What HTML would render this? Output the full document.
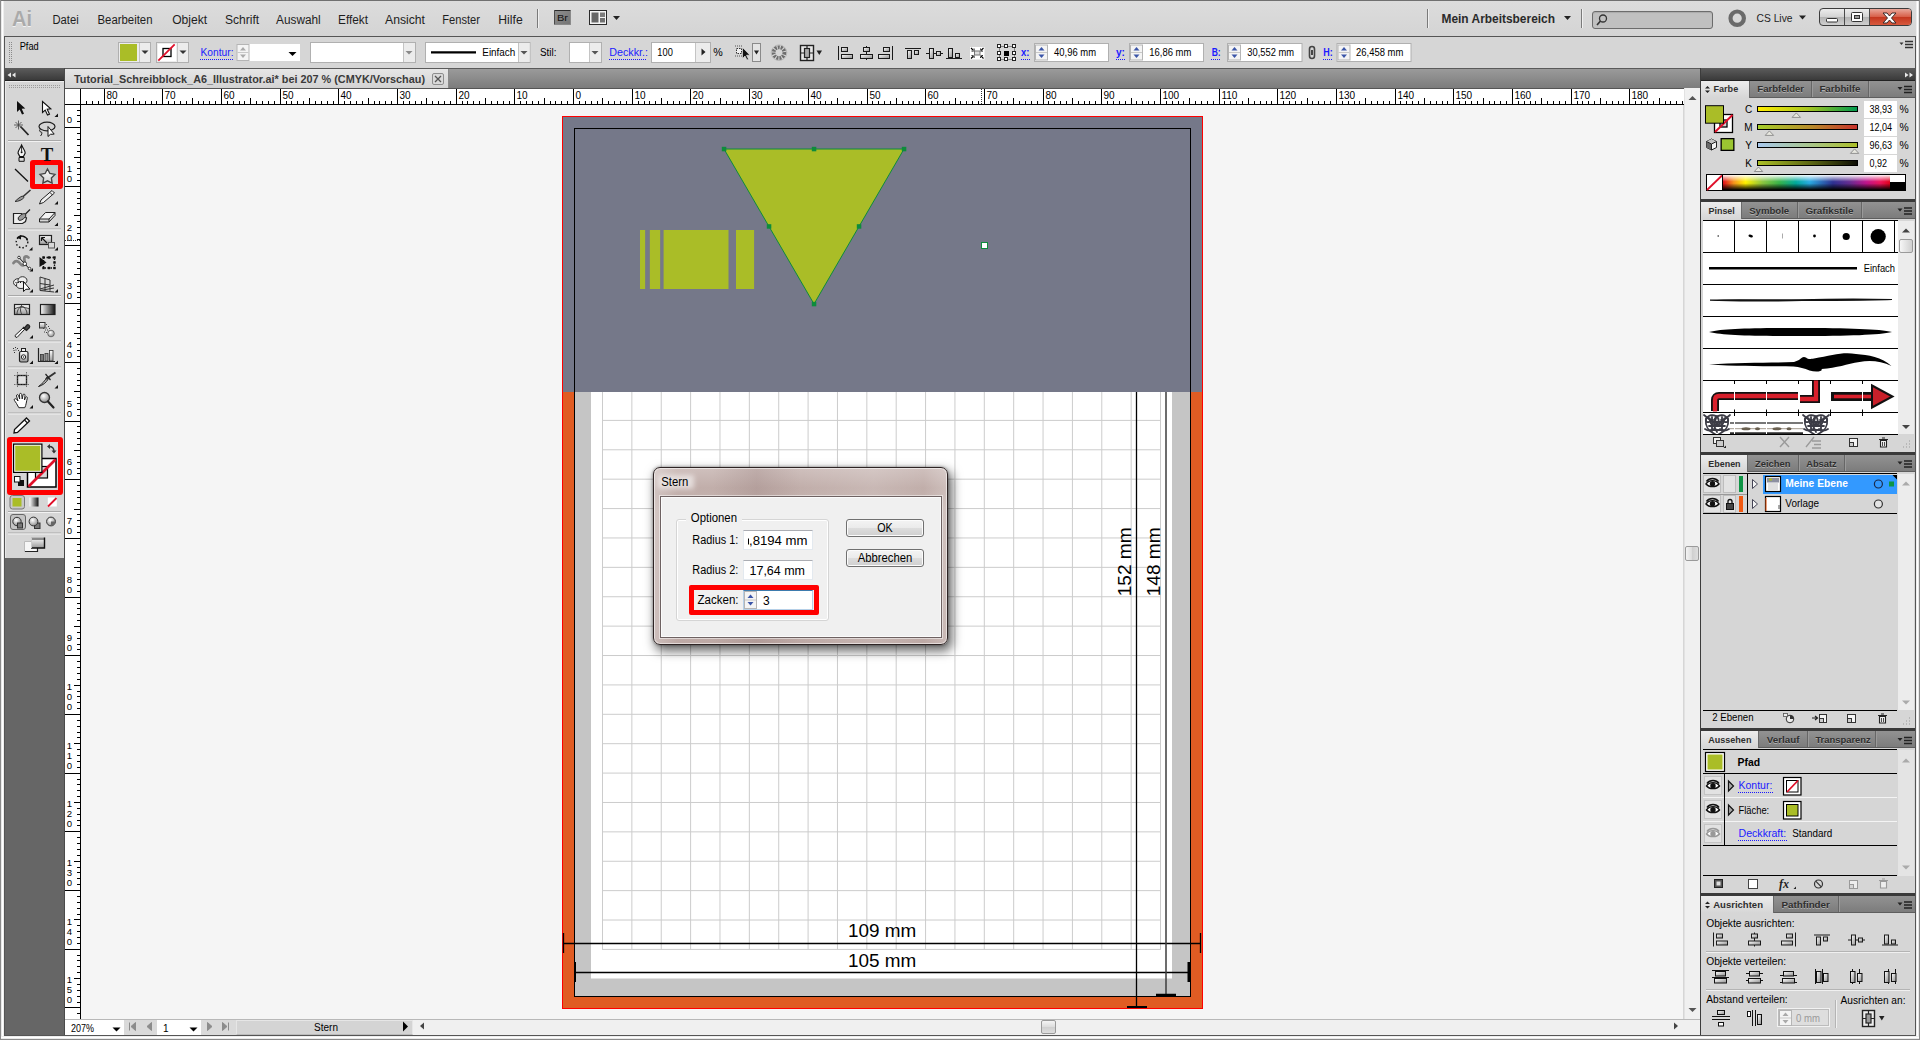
<!DOCTYPE html>
<html lang="de">
<head>
<meta charset="utf-8">
<title>Tutorial_Schreibblock_A6_Illustrator.ai</title>
<style>
*{box-sizing:border-box;margin:0;padding:0}
html,body{width:1920px;height:1040px;overflow:hidden}
body{position:relative;background:#d6d6d6;font-family:"Liberation Sans","DejaVu Sans",sans-serif;font-size:11px;color:#000}
.a{position:absolute}
.t{position:absolute;white-space:nowrap;line-height:1}
svg{position:absolute;overflow:visible}
.ui{font-family:"DejaVu Sans","Liberation Sans",sans-serif}
.blue{color:#1a1aff}
.dot{border-bottom:1px dotted #1a1aff}
</style>
</head>
<body>
<!-- window frame -->
<div class="a" style="left:0;top:0;width:1920px;height:1040px;background:#d6d6d6"></div>
<!-- app bar -->
<div class="a" id="appbar" style="left:1px;top:1px;width:1918px;height:35px;background:linear-gradient(#dcdcdc,#d4d4d4)"></div>
<div class="a" style="left:0;top:0;width:1920px;height:1px;background:#707070"></div>
<!-- control bar -->
<div class="a" id="ctrlbar" style="left:5px;top:36px;width:1910px;height:32px;background:#d6d6d6;border-top:1px solid #555"></div>
<!-- dark zone left (under tools) -->
<div class="a" style="left:5px;top:68px;width:60px;height:967px;background:#666"></div>
<!-- doc tab strip -->
<div class="a" style="left:65px;top:68px;width:1635px;height:20px;background:linear-gradient(#9c9c9c,#7c7c7c)"></div>
<!-- canvas -->
<div class="a" id="canvas" style="left:81px;top:105px;width:1602px;height:914px;background:#f5f5f5"></div>
<!-- right dock background -->
<div class="a" style="left:1700px;top:68px;width:215px;height:967px;background:#3a3a3a"></div>
<!-- window borders -->
<div class="a" style="left:0;top:0;width:1px;height:1040px;background:#8a8a8a"></div>
<div class="a" style="left:1px;top:1px;width:3px;height:1038px;background:linear-gradient(90deg,#dedede,#fff,#e6e6e6)"></div>
<div class="a" style="left:4px;top:36px;width:1px;height:1000px;background:#555"></div>
<div class="a" style="left:1915px;top:36px;width:1px;height:1000px;background:#555"></div>
<div class="a" style="left:1916px;top:1px;width:3px;height:1038px;background:linear-gradient(90deg,#e6e6e6,#fff,#dedede)"></div>
<div class="a" style="left:1919px;top:0;width:1px;height:1040px;background:#8a8a8a"></div>
<div class="a" style="left:4px;top:1035px;width:1912px;height:1px;background:#555"></div>
<div class="a" style="left:1px;top:1036px;width:1918px;height:3px;background:linear-gradient(#e6e6e6,#fff,#dedede)"></div>
<div class="a" style="left:0;top:1039px;width:1920px;height:1px;background:#8a8a8a"></div>
<svg id="art" class="a" style="left:0;top:0" width="1920" height="1040" viewBox="0 0 1920 1040">
<rect x="562" y="116" width="641" height="893" fill="#e05c23"/>
<rect x="575" y="392" width="615" height="604" fill="#c5c5c5"/>
<rect x="591" y="392" width="581" height="586.5" fill="#fff"/>
<path d="M602.50 392V949.6M631.87 392V949.6M661.24 392V949.6M690.61 392V949.6M719.98 392V949.6M749.35 392V949.6M778.72 392V949.6M808.09 392V949.6M837.46 392V949.6M866.83 392V949.6M896.20 392V949.6M925.57 392V949.6M954.94 392V949.6M984.31 392V949.6M1013.68 392V949.6M1043.05 392V949.6M1072.42 392V949.6M1101.79 392V949.6M1131.16 392V949.6M1160.53 392V949.6M602.2 420.40H1160.8M602.2 449.79H1160.8M602.2 479.18H1160.8M602.2 508.57H1160.8M602.2 537.96H1160.8M602.2 567.35H1160.8M602.2 596.74H1160.8M602.2 626.13H1160.8M602.2 655.52H1160.8M602.2 684.91H1160.8M602.2 714.30H1160.8M602.2 743.69H1160.8M602.2 773.08H1160.8M602.2 802.47H1160.8M602.2 831.86H1160.8M602.2 861.25H1160.8M602.2 890.64H1160.8M602.2 920.03H1160.8M602.2 949.42H1160.8" stroke="#cccccc" stroke-width="1" fill="none"/>
<rect x="563" y="117" width="639" height="275" fill="#757889"/>
<rect x="574.5" y="128.5" width="616" height="868" fill="none" stroke="#000" stroke-width="1"/>
<rect x="562.5" y="116.5" width="640" height="892" fill="none" stroke="#ff0000" stroke-width="1"/>
<rect x="640.00" y="230" width="5.15" height="59" fill="#aabd27"/>
<rect x="649.85" y="230" width="10.30" height="59" fill="#aabd27"/>
<rect x="663.60" y="230" width="64.90" height="59" fill="#aabd27"/>
<rect x="736.00" y="230" width="18.10" height="59" fill="#aabd27"/>
<path d="M724 149H904L814 304Z" fill="#aabd27" stroke="#0d8c3c" stroke-width="1"/>
<rect x="721.8" y="146.8" width="4.500" height="4.500" fill="#0d8c3c"/>
<rect x="811.8" y="146.8" width="4.500" height="4.500" fill="#0d8c3c"/>
<rect x="901.8" y="146.8" width="4.500" height="4.500" fill="#0d8c3c"/>
<rect x="766.8" y="224.2" width="4.500" height="4.500" fill="#0d8c3c"/>
<rect x="856.8" y="224.2" width="4.500" height="4.500" fill="#0d8c3c"/>
<rect x="811.8" y="301.8" width="4.500" height="4.500" fill="#0d8c3c"/>
<rect x="981.5" y="242.5" width="6" height="6" fill="#fff" stroke="#0d8c3c" stroke-width="1"/>
<path d="M563 943.5H1201M575 972.5H1189" stroke="#000" stroke-width="1.5" fill="none"/>
<path d="M563.5 933V953M1200.5 933V953" stroke="#000" stroke-width="1.3" fill="none"/>
<path d="M575 962V982" stroke="#000" stroke-width="2" fill="none"/>
<path d="M1189 962V982" stroke="#000" stroke-width="3" fill="none"/>
<path d="M1136.5 392V1007" stroke="#000" stroke-width="1.3" fill="none"/>
<path d="M1127 1007H1147" stroke="#000" stroke-width="2" fill="none"/>
<path d="M1166 392V995" stroke="#3c3c3c" stroke-width="1.5" fill="none"/>
<path d="M1156 995H1176" stroke="#000" stroke-width="2.5" fill="none"/>
<text x="848" y="937" font-size="18.700" textLength="68.300" lengthAdjust="spacingAndGlyphs" font-family="Liberation Sans, sans-serif">109 mm</text>
<text x="848" y="966.600" font-size="18.700" textLength="68.300" lengthAdjust="spacingAndGlyphs" font-family="Liberation Sans, sans-serif">105 mm</text>
<text transform="translate(1130.500 596.300) rotate(-90)" font-size="18.700" textLength="69" lengthAdjust="spacingAndGlyphs" font-family="Liberation Sans, sans-serif">152 mm</text>
<text transform="translate(1160.200 596.300) rotate(-90)" font-size="18.700" textLength="69" lengthAdjust="spacingAndGlyphs" font-family="Liberation Sans, sans-serif">148 mm</text>
</svg>
<div class="a" style="left:65px;top:68px;width:1635px;height:1px;background:#5a5a5a"></div>
<div class="a" style="left:65px;top:69px;width:384px;height:19px;background:linear-gradient(#e6e6e6,#d3d3d3);border-right:1px solid #8a8a8a"></div>
<div class="a" style="left:64px;top:68px;width:1px;height:967px;background:#4a4a4a"></div>
<div class="a" style="left:65px;top:88px;width:1619px;height:17px;background:#fff;border-top:1px solid #555"></div>
<div class="a" style="left:65px;top:105px;width:16px;height:914px;background:#fff"></div>
<div class="a" style="left:1684px;top:88px;width:16px;height:931px;background:#f0f0f0;border-left:1px solid #e2e2e2"></div>
<svg id="rulers" class="a" style="left:0;top:0" width="1920" height="1040" viewBox="0 0 1920 1040" font-family="Liberation Sans, sans-serif">
<text x="74" y="83" font-size="11.5" fill="#3a3a3a" font-weight="bold" textLength="351" lengthAdjust="spacingAndGlyphs">Tutorial_Schreibblock_A6_Illustrator.ai* bei 207 % (CMYK/Vorschau)</text>
<rect x="432.5" y="73.5" width="11" height="11" fill="#d9d9d9" stroke="#8e8e8e" stroke-width="1" rx="1.5"/>
<path d="M435 76L441 82M441 76L435 82" fill="none" stroke="#555" stroke-width="1.3"/>
<path d="M86 101h1v3h-1zM92 101h1v3h-1zM98 101h1v3h-1zM104 89h1v15h-1zM110 101h1v3h-1zM115 101h1v3h-1zM121 101h1v3h-1zM127 101h1v3h-1zM133 98h1v6h-1zM139 101h1v3h-1zM145 101h1v3h-1zM151 101h1v3h-1zM156 101h1v3h-1zM162 89h1v15h-1zM168 101h1v3h-1zM174 101h1v3h-1zM180 101h1v3h-1zM186 101h1v3h-1zM192 98h1v6h-1zM198 101h1v3h-1zM203 101h1v3h-1zM209 101h1v3h-1zM215 101h1v3h-1zM221 89h1v15h-1zM227 101h1v3h-1zM233 101h1v3h-1zM239 101h1v3h-1zM244 101h1v3h-1zM250 98h1v6h-1zM256 101h1v3h-1zM262 101h1v3h-1zM268 101h1v3h-1zM274 101h1v3h-1zM280 89h1v15h-1zM286 101h1v3h-1zM291 101h1v3h-1zM297 101h1v3h-1zM303 101h1v3h-1zM309 98h1v6h-1zM315 101h1v3h-1zM321 101h1v3h-1zM327 101h1v3h-1zM333 101h1v3h-1zM338 89h1v15h-1zM344 101h1v3h-1zM350 101h1v3h-1zM356 101h1v3h-1zM362 101h1v3h-1zM368 98h1v6h-1zM374 101h1v3h-1zM379 101h1v3h-1zM385 101h1v3h-1zM391 101h1v3h-1zM397 89h1v15h-1zM403 101h1v3h-1zM409 101h1v3h-1zM415 101h1v3h-1zM421 101h1v3h-1zM426 98h1v6h-1zM432 101h1v3h-1zM438 101h1v3h-1zM444 101h1v3h-1zM450 101h1v3h-1zM456 89h1v15h-1zM462 101h1v3h-1zM467 101h1v3h-1zM473 101h1v3h-1zM479 101h1v3h-1zM485 98h1v6h-1zM491 101h1v3h-1zM497 101h1v3h-1zM503 101h1v3h-1zM509 101h1v3h-1zM514 89h1v15h-1zM520 101h1v3h-1zM526 101h1v3h-1zM532 101h1v3h-1zM538 101h1v3h-1zM544 98h1v6h-1zM550 101h1v3h-1zM555 101h1v3h-1zM561 101h1v3h-1zM567 101h1v3h-1zM573 89h1v15h-1zM579 101h1v3h-1zM585 101h1v3h-1zM591 101h1v3h-1zM597 101h1v3h-1zM602 98h1v6h-1zM608 101h1v3h-1zM614 101h1v3h-1zM620 101h1v3h-1zM626 101h1v3h-1zM632 89h1v15h-1zM638 101h1v3h-1zM644 101h1v3h-1zM649 101h1v3h-1zM655 101h1v3h-1zM661 98h1v6h-1zM667 101h1v3h-1zM673 101h1v3h-1zM679 101h1v3h-1zM685 101h1v3h-1zM690 89h1v15h-1zM696 101h1v3h-1zM702 101h1v3h-1zM708 101h1v3h-1zM714 101h1v3h-1zM720 98h1v6h-1zM726 101h1v3h-1zM732 101h1v3h-1zM737 101h1v3h-1zM743 101h1v3h-1zM749 89h1v15h-1zM755 101h1v3h-1zM761 101h1v3h-1zM767 101h1v3h-1zM773 101h1v3h-1zM778 98h1v6h-1zM784 101h1v3h-1zM790 101h1v3h-1zM796 101h1v3h-1zM802 101h1v3h-1zM808 89h1v15h-1zM814 101h1v3h-1zM820 101h1v3h-1zM825 101h1v3h-1zM831 101h1v3h-1zM837 98h1v6h-1zM843 101h1v3h-1zM849 101h1v3h-1zM855 101h1v3h-1zM861 101h1v3h-1zM867 89h1v15h-1zM872 101h1v3h-1zM878 101h1v3h-1zM884 101h1v3h-1zM890 101h1v3h-1zM896 98h1v6h-1zM902 101h1v3h-1zM908 101h1v3h-1zM913 101h1v3h-1zM919 101h1v3h-1zM925 89h1v15h-1zM931 101h1v3h-1zM937 101h1v3h-1zM943 101h1v3h-1zM949 101h1v3h-1zM955 98h1v6h-1zM960 101h1v3h-1zM966 101h1v3h-1zM972 101h1v3h-1zM978 101h1v3h-1zM984 89h1v15h-1zM990 101h1v3h-1zM996 101h1v3h-1zM1001 101h1v3h-1zM1007 101h1v3h-1zM1013 98h1v6h-1zM1019 101h1v3h-1zM1025 101h1v3h-1zM1031 101h1v3h-1zM1037 101h1v3h-1zM1043 89h1v15h-1zM1048 101h1v3h-1zM1054 101h1v3h-1zM1060 101h1v3h-1zM1066 101h1v3h-1zM1072 98h1v6h-1zM1078 101h1v3h-1zM1084 101h1v3h-1zM1089 101h1v3h-1zM1095 101h1v3h-1zM1101 89h1v15h-1zM1107 101h1v3h-1zM1113 101h1v3h-1zM1119 101h1v3h-1zM1125 101h1v3h-1zM1131 98h1v6h-1zM1136 101h1v3h-1zM1142 101h1v3h-1zM1148 101h1v3h-1zM1154 101h1v3h-1zM1160 89h1v15h-1zM1166 101h1v3h-1zM1172 101h1v3h-1zM1178 101h1v3h-1zM1183 101h1v3h-1zM1189 98h1v6h-1zM1195 101h1v3h-1zM1201 101h1v3h-1zM1207 101h1v3h-1zM1213 101h1v3h-1zM1219 89h1v15h-1zM1224 101h1v3h-1zM1230 101h1v3h-1zM1236 101h1v3h-1zM1242 101h1v3h-1zM1248 98h1v6h-1zM1254 101h1v3h-1zM1260 101h1v3h-1zM1266 101h1v3h-1zM1271 101h1v3h-1zM1277 89h1v15h-1zM1283 101h1v3h-1zM1289 101h1v3h-1zM1295 101h1v3h-1zM1301 101h1v3h-1zM1307 98h1v6h-1zM1312 101h1v3h-1zM1318 101h1v3h-1zM1324 101h1v3h-1zM1330 101h1v3h-1zM1336 89h1v15h-1zM1342 101h1v3h-1zM1348 101h1v3h-1zM1354 101h1v3h-1zM1359 101h1v3h-1zM1365 98h1v6h-1zM1371 101h1v3h-1zM1377 101h1v3h-1zM1383 101h1v3h-1zM1389 101h1v3h-1zM1395 89h1v15h-1zM1400 101h1v3h-1zM1406 101h1v3h-1zM1412 101h1v3h-1zM1418 101h1v3h-1zM1424 98h1v6h-1zM1430 101h1v3h-1zM1436 101h1v3h-1zM1442 101h1v3h-1zM1447 101h1v3h-1zM1453 89h1v15h-1zM1459 101h1v3h-1zM1465 101h1v3h-1zM1471 101h1v3h-1zM1477 101h1v3h-1zM1483 98h1v6h-1zM1489 101h1v3h-1zM1494 101h1v3h-1zM1500 101h1v3h-1zM1506 101h1v3h-1zM1512 89h1v15h-1zM1518 101h1v3h-1zM1524 101h1v3h-1zM1530 101h1v3h-1zM1535 101h1v3h-1zM1541 98h1v6h-1zM1547 101h1v3h-1zM1553 101h1v3h-1zM1559 101h1v3h-1zM1565 101h1v3h-1zM1571 89h1v15h-1zM1577 101h1v3h-1zM1582 101h1v3h-1zM1588 101h1v3h-1zM1594 101h1v3h-1zM1600 98h1v6h-1zM1606 101h1v3h-1zM1612 101h1v3h-1zM1618 101h1v3h-1zM1623 101h1v3h-1zM1629 89h1v15h-1zM1635 101h1v3h-1zM1641 101h1v3h-1zM1647 101h1v3h-1zM1653 101h1v3h-1zM1659 98h1v6h-1zM1665 101h1v3h-1zM1670 101h1v3h-1zM1676 101h1v3h-1zM1682 101h1v3h-1zM65 104H1684v1H65zM80 89h1v930h-1zM77 110h3v1h-3zM77 115h3v1h-3zM77 121h3v1h-3zM65 127h15v1h-15zM77 133h3v1h-3zM77 139h3v1h-3zM77 145h3v1h-3zM77 151h3v1h-3zM74 157h6v1h-6zM77 162h3v1h-3zM77 168h3v1h-3zM77 174h3v1h-3zM77 180h3v1h-3zM65 186h15v1h-15zM77 192h3v1h-3zM77 198h3v1h-3zM77 203h3v1h-3zM77 209h3v1h-3zM74 215h6v1h-6zM77 221h3v1h-3zM77 227h3v1h-3zM77 233h3v1h-3zM77 239h3v1h-3zM65 245h15v1h-15zM77 250h3v1h-3zM77 256h3v1h-3zM77 262h3v1h-3zM77 268h3v1h-3zM74 274h6v1h-6zM77 280h3v1h-3zM77 286h3v1h-3zM77 292h3v1h-3zM77 297h3v1h-3zM65 303h15v1h-15zM77 309h3v1h-3zM77 315h3v1h-3zM77 321h3v1h-3zM77 327h3v1h-3zM74 333h6v1h-6zM77 338h3v1h-3zM77 344h3v1h-3zM77 350h3v1h-3zM77 356h3v1h-3zM65 362h15v1h-15zM77 368h3v1h-3zM77 374h3v1h-3zM77 380h3v1h-3zM77 385h3v1h-3zM74 391h6v1h-6zM77 397h3v1h-3zM77 403h3v1h-3zM77 409h3v1h-3zM77 415h3v1h-3zM65 421h15v1h-15zM77 426h3v1h-3zM77 432h3v1h-3zM77 438h3v1h-3zM77 444h3v1h-3zM74 450h6v1h-6zM77 456h3v1h-3zM77 462h3v1h-3zM77 468h3v1h-3zM77 473h3v1h-3zM65 479h15v1h-15zM77 485h3v1h-3zM77 491h3v1h-3zM77 497h3v1h-3zM77 503h3v1h-3zM74 509h6v1h-6zM77 514h3v1h-3zM77 520h3v1h-3zM77 526h3v1h-3zM77 532h3v1h-3zM65 538h15v1h-15zM77 544h3v1h-3zM77 550h3v1h-3zM77 556h3v1h-3zM77 561h3v1h-3zM74 567h6v1h-6zM77 573h3v1h-3zM77 579h3v1h-3zM77 585h3v1h-3zM77 591h3v1h-3zM65 597h15v1h-15zM77 603h3v1h-3zM77 608h3v1h-3zM77 614h3v1h-3zM77 620h3v1h-3zM74 626h6v1h-6zM77 632h3v1h-3zM77 638h3v1h-3zM77 644h3v1h-3zM77 649h3v1h-3zM65 655h15v1h-15zM77 661h3v1h-3zM77 667h3v1h-3zM77 673h3v1h-3zM77 679h3v1h-3zM74 685h6v1h-6zM77 691h3v1h-3zM77 696h3v1h-3zM77 702h3v1h-3zM77 708h3v1h-3zM65 714h15v1h-15zM77 720h3v1h-3zM77 726h3v1h-3zM77 732h3v1h-3zM77 737h3v1h-3zM74 743h6v1h-6zM77 749h3v1h-3zM77 755h3v1h-3zM77 761h3v1h-3zM77 767h3v1h-3zM65 773h15v1h-15zM77 779h3v1h-3zM77 784h3v1h-3zM77 790h3v1h-3zM77 796h3v1h-3zM74 802h6v1h-6zM77 808h3v1h-3zM77 814h3v1h-3zM77 820h3v1h-3zM77 825h3v1h-3zM65 831h15v1h-15zM77 837h3v1h-3zM77 843h3v1h-3zM77 849h3v1h-3zM77 855h3v1h-3zM74 861h6v1h-6zM77 867h3v1h-3zM77 872h3v1h-3zM77 878h3v1h-3zM77 884h3v1h-3zM65 890h15v1h-15zM77 896h3v1h-3zM77 902h3v1h-3zM77 908h3v1h-3zM77 914h3v1h-3zM74 919h6v1h-6zM77 925h3v1h-3zM77 931h3v1h-3zM77 937h3v1h-3zM77 943h3v1h-3zM65 949h15v1h-15zM77 955h3v1h-3zM77 960h3v1h-3zM77 966h3v1h-3zM77 972h3v1h-3zM74 978h6v1h-6zM77 984h3v1h-3zM77 990h3v1h-3zM77 996h3v1h-3zM77 1002h3v1h-3zM65 1007h15v1h-15zM77 1013h3v1h-3z" fill="#000"/>
<text x="106.4" y="98.9" font-size="10" fill="#000">80</text>
<text x="164.4" y="98.9" font-size="10" fill="#000">70</text>
<text x="223.4" y="98.9" font-size="10" fill="#000">60</text>
<text x="282.4" y="98.9" font-size="10" fill="#000">50</text>
<text x="340.4" y="98.9" font-size="10" fill="#000">40</text>
<text x="399.4" y="98.9" font-size="10" fill="#000">30</text>
<text x="458.4" y="98.9" font-size="10" fill="#000">20</text>
<text x="516.4" y="98.9" font-size="10" fill="#000">10</text>
<text x="575.4" y="98.9" font-size="10" fill="#000">0</text>
<text x="634.4" y="98.9" font-size="10" fill="#000">10</text>
<text x="692.4" y="98.9" font-size="10" fill="#000">20</text>
<text x="751.4" y="98.9" font-size="10" fill="#000">30</text>
<text x="810.4" y="98.9" font-size="10" fill="#000">40</text>
<text x="869.4" y="98.9" font-size="10" fill="#000">50</text>
<text x="927.4" y="98.9" font-size="10" fill="#000">60</text>
<text x="986.4" y="98.9" font-size="10" fill="#000">70</text>
<text x="1045.4" y="98.9" font-size="10" fill="#000">80</text>
<text x="1103.4" y="98.9" font-size="10" fill="#000">90</text>
<text x="1162.4" y="98.9" font-size="10" fill="#000">100</text>
<text x="1221.4" y="98.9" font-size="10" fill="#000">110</text>
<text x="1279.4" y="98.9" font-size="10" fill="#000">120</text>
<text x="1338.4" y="98.9" font-size="10" fill="#000">130</text>
<text x="1397.4" y="98.9" font-size="10" fill="#000">140</text>
<text x="1455.4" y="98.9" font-size="10" fill="#000">150</text>
<text x="1514.4" y="98.9" font-size="10" fill="#000">160</text>
<text x="1573.4" y="98.9" font-size="10" fill="#000">170</text>
<text x="1631.4" y="98.9" font-size="10" fill="#000">180</text>
<text x="69.5" y="122.8" font-size="9.6" fill="#000" text-anchor="middle">0</text>
<text x="69.5" y="181.8" font-size="9.6" fill="#000" text-anchor="middle">0</text>
<text x="69.5" y="171.8" font-size="9.6" fill="#000" text-anchor="middle">1</text>
<text x="69.5" y="240.8" font-size="9.6" fill="#000" text-anchor="middle">0</text>
<text x="69.5" y="230.8" font-size="9.6" fill="#000" text-anchor="middle">2</text>
<text x="69.5" y="298.8" font-size="9.6" fill="#000" text-anchor="middle">0</text>
<text x="69.5" y="288.8" font-size="9.6" fill="#000" text-anchor="middle">3</text>
<text x="69.5" y="357.8" font-size="9.6" fill="#000" text-anchor="middle">0</text>
<text x="69.5" y="347.8" font-size="9.6" fill="#000" text-anchor="middle">4</text>
<text x="69.5" y="416.8" font-size="9.6" fill="#000" text-anchor="middle">0</text>
<text x="69.5" y="406.8" font-size="9.6" fill="#000" text-anchor="middle">5</text>
<text x="69.5" y="474.8" font-size="9.6" fill="#000" text-anchor="middle">0</text>
<text x="69.5" y="464.8" font-size="9.6" fill="#000" text-anchor="middle">6</text>
<text x="69.5" y="533.8" font-size="9.6" fill="#000" text-anchor="middle">0</text>
<text x="69.5" y="523.8" font-size="9.6" fill="#000" text-anchor="middle">7</text>
<text x="69.5" y="592.8" font-size="9.6" fill="#000" text-anchor="middle">0</text>
<text x="69.5" y="582.8" font-size="9.6" fill="#000" text-anchor="middle">8</text>
<text x="69.5" y="650.8" font-size="9.6" fill="#000" text-anchor="middle">0</text>
<text x="69.5" y="640.8" font-size="9.6" fill="#000" text-anchor="middle">9</text>
<text x="69.5" y="709.8" font-size="9.6" fill="#000" text-anchor="middle">0</text>
<text x="69.5" y="699.8" font-size="9.6" fill="#000" text-anchor="middle">0</text>
<text x="69.5" y="689.8" font-size="9.6" fill="#000" text-anchor="middle">1</text>
<text x="69.5" y="768.8" font-size="9.6" fill="#000" text-anchor="middle">0</text>
<text x="69.5" y="758.8" font-size="9.6" fill="#000" text-anchor="middle">1</text>
<text x="69.5" y="748.8" font-size="9.6" fill="#000" text-anchor="middle">1</text>
<text x="69.5" y="826.8" font-size="9.6" fill="#000" text-anchor="middle">0</text>
<text x="69.5" y="816.8" font-size="9.6" fill="#000" text-anchor="middle">2</text>
<text x="69.5" y="806.8" font-size="9.6" fill="#000" text-anchor="middle">1</text>
<text x="69.5" y="885.8" font-size="9.6" fill="#000" text-anchor="middle">0</text>
<text x="69.5" y="875.8" font-size="9.6" fill="#000" text-anchor="middle">3</text>
<text x="69.5" y="865.8" font-size="9.6" fill="#000" text-anchor="middle">1</text>
<text x="69.5" y="944.8" font-size="9.6" fill="#000" text-anchor="middle">0</text>
<text x="69.5" y="934.8" font-size="9.6" fill="#000" text-anchor="middle">4</text>
<text x="69.5" y="924.8" font-size="9.6" fill="#000" text-anchor="middle">1</text>
<text x="69.5" y="1002.8" font-size="9.6" fill="#000" text-anchor="middle">0</text>
<text x="69.5" y="992.8" font-size="9.6" fill="#000" text-anchor="middle">5</text>
<text x="69.5" y="982.8" font-size="9.6" fill="#000" text-anchor="middle">1</text>
<path d="M981.5 89V104" fill="none" stroke="#333" stroke-width="1" stroke-dasharray="1 1"/>
<path d="M65 240.5H80" fill="none" stroke="#333" stroke-width="1" stroke-dasharray="1 1"/>
</svg>
<div class="a" style="left:65px;top:1019px;width:1635px;height:16px;background:#f0f0f0;border-top:1px solid #b8b8b8"></div>
<div class="a" style="left:65px;top:1020px;width:59px;height:15px;background:#fff"></div>
<div class="a" style="left:124px;top:1020px;width:33px;height:15px;background:#dadada"></div>
<div class="a" style="left:157px;top:1020px;width:44px;height:15px;background:#fff"></div>
<div class="a" style="left:201px;top:1020px;width:35px;height:15px;background:#dadada"></div>
<div class="a" style="left:236px;top:1020px;width:177px;height:15px;background:#d4d4d4;border:1px solid #e6e6e6;border-bottom-color:#bbb"></div>
<div class="a" style="left:1041px;top:1020px;width:15px;height:14px;background:linear-gradient(#f4f4f4,#dcdcdc 50%,#cfcfcf 51%,#dedede);border:1px solid #9a9a9a;border-radius:2px"></div>
<div class="a" style="left:1685px;top:546px;width:14px;height:15px;background:linear-gradient(90deg,#f4f4f4,#dcdcdc 50%,#cfcfcf 51%,#dedede);border:1px solid #9a9a9a;border-radius:2px"></div>
<svg id="status" class="a" style="left:0;top:0" width="1920" height="1040" viewBox="0 0 1920 1040" font-family="Liberation Sans, sans-serif">
<text x="71" y="1031.5" font-size="10" fill="#000" textLength="23" lengthAdjust="spacingAndGlyphs">207%</text>
<path d="M112.5 1027.5h8l-4 4z" fill="#000"/>
<text x="163" y="1031.5" font-size="10" fill="#000">1</text>
<path d="M189.5 1027.5h8l-4 4z" fill="#000"/>
<path d="M129.5 1022.5v8M135.5 1022.5v8l-4.5-4z" fill="#8c8c8c" stroke="#8c8c8c" stroke-width="1"/>
<path d="M151.5 1022.5v8l-4.5-4z" fill="#8c8c8c" stroke="#8c8c8c" stroke-width="1"/>
<path d="M207.5 1022.5v8l4.5-4z" fill="#8c8c8c" stroke="#8c8c8c" stroke-width="1"/>
<path d="M222.5 1022.5v8l4.5-4zM228.5 1022.5v8" fill="#8c8c8c" stroke="#8c8c8c" stroke-width="1"/>
<text x="326" y="1031" font-size="10" fill="#000" text-anchor="middle">Stern</text>
<path d="M403 1021.5v10l5-5z" fill="#000"/>
<path d="M424 1022.5v7l-4-3.5z" fill="#444"/>
<path d="M1674 1022.5v7l4-3.5z" fill="#444"/>
<path d="M1688.5 100h8l-4-4z" fill="#555"/>
<path d="M1688.5 1008h8l-4 4z" fill="#555"/>
</svg>
<div class="a" style="left:554px;top:10px;width:17px;height:15px;background:linear-gradient(135deg,#8e8e8e,#747474);border:1px solid #8a8a8a;border-top-color:#2a2a2a;border-left-color:#4a4a4a;border-radius:1px"></div>
<div class="a" style="left:1592px;top:11px;width:121px;height:18px;background:#c0c0c0;border:1px solid #6c6c6c;border-radius:3px;box-shadow:inset 0 1px 1px #aaa"></div>
<div class="a" style="left:1819px;top:8px;width:93px;height:18px;border:1px solid #3c3c3c;border-radius:4px;background:linear-gradient(#ececec,#d4d4d4 48%,#b4b4b4 52%,#cfcfcf);overflow:hidden"><div class="a" style="left:50px;top:0;width:42px;height:16px;background:linear-gradient(#e9a79a,#d8604a 48%,#c4371f 52%,#d85a3e)"></div><div class="a" style="left:24px;top:0;width:1px;height:16px;background:#4a4a4a"></div><div class="a" style="left:49px;top:0;width:1px;height:16px;background:#4a4a4a"></div></div>
<svg id="appbar_svg" class="a" style="left:0;top:0" width="1920" height="1040" viewBox="0 0 1920 1040" font-family="Liberation Sans, sans-serif">
<text x="12" y="26.5" font-size="22" fill="#f2f2f2" font-weight="bold" textLength="20" lengthAdjust="spacingAndGlyphs">Ai</text>
<text x="12" y="25.5" font-size="22" fill="#aaaaaa" font-weight="bold" textLength="20" lengthAdjust="spacingAndGlyphs">Ai</text>
<text x="52.5" y="23.8" font-size="12" fill="#1e1e1e" textLength="26.2" lengthAdjust="spacingAndGlyphs">Datei</text>
<text x="97.5" y="23.8" font-size="12" fill="#1e1e1e" textLength="55" lengthAdjust="spacingAndGlyphs">Bearbeiten</text>
<text x="172.2" y="23.8" font-size="12" fill="#1e1e1e" textLength="35" lengthAdjust="spacingAndGlyphs">Objekt</text>
<text x="225" y="23.8" font-size="12" fill="#1e1e1e" textLength="34.2" lengthAdjust="spacingAndGlyphs">Schrift</text>
<text x="276" y="23.8" font-size="12" fill="#1e1e1e" textLength="44.7" lengthAdjust="spacingAndGlyphs">Auswahl</text>
<text x="338" y="23.8" font-size="12" fill="#1e1e1e" textLength="30" lengthAdjust="spacingAndGlyphs">Effekt</text>
<text x="385" y="23.8" font-size="12" fill="#1e1e1e" textLength="40" lengthAdjust="spacingAndGlyphs">Ansicht</text>
<text x="442.3" y="23.8" font-size="12" fill="#1e1e1e" textLength="37.7" lengthAdjust="spacingAndGlyphs">Fenster</text>
<text x="498.3" y="23.8" font-size="12" fill="#1e1e1e" textLength="24.4" lengthAdjust="spacingAndGlyphs">Hilfe</text>
<path d="M537.5 9V28M1427.5 9V28M1581.5 9V28" fill="none" stroke="#7a7a7a" stroke-width="1"/>
<path d="M538.5 9V28M1428.5 9V28M1582.5 9V28" fill="none" stroke="#f0f0f0" stroke-width="1"/>
<text x="562.5" y="21.3" font-size="9.5" fill="#111" text-anchor="middle" textLength="11" lengthAdjust="spacingAndGlyphs">Br</text>
<rect x="589.5" y="10.5" width="17" height="14" fill="#f4f4f4" stroke="#2a2a2a" stroke-width="1"/>
<rect x="591.5" y="12.5" width="7" height="10" fill="#666"/>
<rect x="600" y="12.5" width="5" height="4.5" fill="#7c7c7c"/>
<rect x="600" y="18" width="5" height="4.5" fill="#707070"/>
<path d="M613 16h7l-3.5 4z" fill="#222"/>
<text x="1441.5" y="23" font-size="12" fill="#2a2a2a" font-weight="bold" textLength="113.5" lengthAdjust="spacingAndGlyphs">Mein Arbeitsbereich</text>
<path d="M1564 16h7l-3.5 4z" fill="#222"/>
<circle cx="1603" cy="18.5" r="3.5" fill="none" stroke="#333" stroke-width="1.3"/>
<path d="M1600.5 21L1597 25" fill="none" stroke="#333" stroke-width="1.6"/>
<circle cx="1737.2" cy="18.2" r="6.7" fill="none" stroke="#6a6a6a" stroke-width="4.2"/>
<text x="1756.5" y="21.5" font-size="11" fill="#1e1e1e" textLength="36" lengthAdjust="spacingAndGlyphs">CS Live</text>
<path d="M1799 15.5h7l-3.5 4z" fill="#222"/>
<rect x="1826.5" y="18.5" width="11" height="3.5" fill="#fff" stroke="#333" stroke-width="1" rx="1"/>
<rect x="1851.5" y="12.5" width="11" height="9" fill="#fff" stroke="#333" stroke-width="1" rx="1"/>
<rect x="1854.5" y="15.5" width="5" height="3" fill="#999" stroke="#333" stroke-width="1"/>
<path d="M1883 13l4 0 2.5 3 2.5-3 4 0-4.5 5 4.5 5-4 0-2.5-3-2.5 3-4 0 4.5-5z" fill="#fff" stroke="#3a2a2a" stroke-width="1"/>
</svg>
<svg id="ctrl" class="a" style="left:0;top:0" width="1920" height="1040" viewBox="0 0 1920 1040" font-family="Liberation Sans, sans-serif">
<defs><linearGradient id="gbox" x1="0" y1="0" x2="1" y2="1"><stop offset="0" stop-color="#fff"/><stop offset="1" stop-color="#8e8e8e"/></linearGradient></defs>
<path d="M9 42h1v1h-1zM11 42h1v1h-1zM9 44h1v1h-1zM11 44h1v1h-1zM9 46h1v1h-1zM11 46h1v1h-1zM9 48h1v1h-1zM11 48h1v1h-1zM9 50h1v1h-1zM11 50h1v1h-1zM9 52h1v1h-1zM11 52h1v1h-1zM9 54h1v1h-1zM11 54h1v1h-1zM9 56h1v1h-1zM11 56h1v1h-1zM9 58h1v1h-1zM11 58h1v1h-1zM9 60h1v1h-1zM11 60h1v1h-1zM9 62h1v1h-1zM11 62h1v1h-1z" fill="#8a8a8a"/>
<text x="19.7" y="49.5" font-size="10" fill="#000" textLength="19" lengthAdjust="spacingAndGlyphs">Pfad</text>
<rect x="118.5" y="42.5" width="32" height="20" fill="#ececec" stroke="#b0b0b0" stroke-width="1"/>
<rect x="120" y="44" width="17" height="17" fill="#aabd27"/>
<path d="M139.5 43V62" fill="none" stroke="#c4c4c4" stroke-width="1"/>
<path d="M141.5 50.5h7l-3.5 3.5z" fill="#333"/>
<rect x="156.5" y="42.5" width="32" height="20" fill="#ececec" stroke="#b0b0b0" stroke-width="1"/>
<rect x="158" y="44" width="18" height="17" fill="#fff"/>
<rect x="163" y="48.5" width="8" height="8" fill="none" stroke="#000" stroke-width="1.3"/>
<path d="M158.3 60.7L174.7 44.3" fill="none" stroke="#e0102a" stroke-width="1.8"/>
<path d="M177.5 43V62" fill="none" stroke="#c4c4c4" stroke-width="1"/>
<path d="M179.5 50.5h7l-3.5 3.5z" fill="#333"/>
<text x="200.5" y="55.7" font-size="10" fill="#1a1aff" textLength="33" lengthAdjust="spacingAndGlyphs">Kontur:</text>
<path d="M200 59.5H234" fill="none" stroke="#1a1aff" stroke-width="1" stroke-dasharray="1 1"/>
<rect x="249" y="44" width="51" height="17" fill="#fff"/>
<rect x="237" y="44.5" width="12" height="16" fill="#f4f4f4" stroke="#b5b5b5" stroke-width="1"/><path d="M237.5 52.5h11" fill="none" stroke="#c8c8c8" stroke-width="1"/><path d="M240 50.5l3 -3.5l3 3.5z" fill="#aaa"/><path d="M240 54.5l3 3.5l3 -3.5z" fill="#aaa"/>
<path d="M288.5 52h8l-4 4z" fill="#000"/>
<rect x="310.5" y="42.5" width="105" height="20" fill="#fff" stroke="#b0b0b0" stroke-width="1"/>
<rect x="403" y="43" width="12" height="19" fill="#ececec"/>
<path d="M403.5 43V62" fill="none" stroke="#c4c4c4" stroke-width="1"/>
<path d="M405.5 51h7l-3.5 3.5z" fill="#8a8a8a"/>
<rect x="425.5" y="42.5" width="104.5" height="20" fill="#fff" stroke="#b0b0b0" stroke-width="1"/>
<rect x="518" y="43" width="11.5" height="19" fill="#ececec"/>
<path d="M518.5 43V62" fill="none" stroke="#c4c4c4" stroke-width="1"/>
<path d="M520.5 51h7l-3.5 3.5z" fill="#555"/>
<path d="M431 52.3H476" fill="none" stroke="#000" stroke-width="2.2"/>
<text x="482.3" y="55.7" font-size="10" fill="#000" textLength="33" lengthAdjust="spacingAndGlyphs">Einfach</text>
<text x="540" y="55.7" font-size="10" fill="#000" textLength="16.5" lengthAdjust="spacingAndGlyphs">Stil:</text>
<rect x="569.5" y="42.5" width="32" height="20" fill="#fff" stroke="#b0b0b0" stroke-width="1"/>
<rect x="589" y="43" width="12" height="19" fill="#ececec"/>
<path d="M589.5 43V62" fill="none" stroke="#c4c4c4" stroke-width="1"/>
<path d="M591.5 51h7l-3.5 3.5z" fill="#555"/>
<text x="609.3" y="55.7" font-size="10" fill="#1a1aff" textLength="38.7" lengthAdjust="spacingAndGlyphs">Deckkr.:</text>
<path d="M609 59.5H647" fill="none" stroke="#1a1aff" stroke-width="1" stroke-dasharray="1 1"/>
<rect x="651.5" y="42.5" width="59" height="20" fill="#fff" stroke="#b0b0b0" stroke-width="1"/>
<rect x="695" y="43" width="15" height="19" fill="#ececec"/>
<path d="M695.5 43V62" fill="none" stroke="#c4c4c4" stroke-width="1"/>
<path d="M701.5 48.5v7l4-3.5z" fill="#222"/>
<text x="657.3" y="55.7" font-size="10" fill="#000" textLength="15.5" lengthAdjust="spacingAndGlyphs">100</text>
<text x="713.3" y="55.7" font-size="10" fill="#000" textLength="9.5" lengthAdjust="spacingAndGlyphs">%</text>
<rect x="736.5" y="48.5" width="5" height="5" fill="#eee" stroke="#333" stroke-width="1" stroke-dasharray="1.5 1"/>
<path d="M735 46h8M735 56h8" fill="none" stroke="#555" stroke-width="1" stroke-dasharray="1 1"/>
<path d="M742.5 47.5l0 11 2.5-2.5 2 4 1.5-.8-2-4 3.5 0z" fill="#111" stroke="#eee" stroke-width="0.6"/>
<rect x="752.5" y="43.5" width="8" height="18" fill="#e4e4e4" stroke="#8a8a8a" stroke-width="1"/>
<path d="M754 50.5h5l-2.5 4z" fill="#222"/>
<circle cx="779" cy="52.7" r="5.5" fill="none" stroke="#6e6e6e" stroke-width="4" stroke-dasharray="2 1"/>
<circle cx="779" cy="52.7" r="7.8" fill="none" stroke="#b8b8b8" stroke-width="1"/>
<rect x="800.5" y="45.5" width="13" height="15" fill="#e8e8e8" stroke="#222" stroke-width="1.4"/>
<rect x="804.5" y="48.5" width="5" height="9" fill="#aaa" stroke="#222" stroke-width="1.2"/>
<path d="M807 45.5v3M807 57.5v3M800.5 53h4M809.5 53h4" fill="none" stroke="#222" stroke-width="1.2"/>
<path d="M816.5 50.5h5.5l-2.7 4.5z" fill="#222"/>
<path d="M838.5 46v14" fill="none" stroke="#1a1a1a" stroke-width="1"/><rect x="841.5" y="47.5" width="6" height="4" fill="url(#gbox)" stroke="#1a1a1a" stroke-width="1"/><rect x="841.5" y="54.5" width="11" height="4" fill="url(#gbox)" stroke="#1a1a1a" stroke-width="1"/>
<path d="M866.5 46v14" fill="none" stroke="#1a1a1a" stroke-width="1"/><rect x="863.5" y="47.5" width="6" height="4" fill="url(#gbox)" stroke="#1a1a1a" stroke-width="1"/><rect x="860.5" y="54.5" width="12" height="4" fill="url(#gbox)" stroke="#1a1a1a" stroke-width="1"/>
<path d="M892.5 46v14" fill="none" stroke="#1a1a1a" stroke-width="1"/><rect x="883.5" y="47.5" width="6" height="4" fill="url(#gbox)" stroke="#1a1a1a" stroke-width="1"/><rect x="878.5" y="54.5" width="11" height="4" fill="url(#gbox)" stroke="#1a1a1a" stroke-width="1"/>
<path d="M905 48.5h16" fill="none" stroke="#1a1a1a" stroke-width="1"/><rect x="907.5" y="50.5" width="4" height="8" fill="url(#gbox)" stroke="#1a1a1a" stroke-width="1"/><rect x="914.5" y="50.5" width="4" height="4" fill="url(#gbox)" stroke="#1a1a1a" stroke-width="1"/>
<path d="M926 53.5h17" fill="none" stroke="#1a1a1a" stroke-width="1"/><rect x="929.5" y="48.5" width="4" height="10" fill="url(#gbox)" stroke="#1a1a1a" stroke-width="1"/><rect x="936.5" y="51.5" width="4" height="4" fill="url(#gbox)" stroke="#1a1a1a" stroke-width="1"/>
<path d="M946 58.5h16" fill="none" stroke="#1a1a1a" stroke-width="1"/><rect x="948.5" y="48.5" width="4" height="9" fill="url(#gbox)" stroke="#1a1a1a" stroke-width="1"/><rect x="955.5" y="53.5" width="4" height="4" fill="url(#gbox)" stroke="#1a1a1a" stroke-width="1"/>
<rect x="970" y="47" width="14.5" height="12.5" fill="#fff"/>
<rect x="974.5" y="51" width="5.5" height="4" fill="#ddd" stroke="#777" stroke-width="1"/>
<path d="M971 48l2.5 2.5M983.5 48l-2.5 2.5M971 58.5l2.5-2.5M983.5 58.5l-2.5-2.5" fill="none" stroke="#000" stroke-width="1.1"/>
<path d="M974.5 51.5h-3v-1zM974.5 51.5v-3h-1zM980 51.5h3v-1zM980 51.5v-3h1zM974.5 55h-3v1zM974.5 55v3h-1zM980 55h3v1zM980 55v3h1z" fill="#000"/>
<path d="M999.5 46.5H1014.5V59.5H999.5Z" fill="none" stroke="#333" stroke-width="1" stroke-dasharray="1 1"/>
<rect x="997.5" y="44.5" width="3" height="3" fill="#fff" stroke="#222" stroke-width="1"/>
<rect x="997.5" y="51.5" width="3" height="3" fill="#fff" stroke="#222" stroke-width="1"/>
<rect x="997.5" y="57.5" width="3" height="3" fill="#fff" stroke="#222" stroke-width="1"/>
<rect x="1004.5" y="44.5" width="3" height="3" fill="#fff" stroke="#222" stroke-width="1"/>
<rect x="1004" y="51" width="5" height="5" fill="#000"/>
<rect x="1004.5" y="57.5" width="3" height="3" fill="#fff" stroke="#222" stroke-width="1"/>
<rect x="1012.5" y="44.5" width="3" height="3" fill="#fff" stroke="#222" stroke-width="1"/>
<rect x="1012.5" y="51.5" width="3" height="3" fill="#fff" stroke="#222" stroke-width="1"/>
<rect x="1012.5" y="57.5" width="3" height="3" fill="#fff" stroke="#222" stroke-width="1"/>
<text x="1021" y="55.7" font-size="10" fill="#1a1aff" font-weight="bold" textLength="8.5" lengthAdjust="spacingAndGlyphs">x:</text>
<path d="M1021 59.5H1030" fill="none" stroke="#1a1aff" stroke-width="1" stroke-dasharray="1 1"/>
<rect x="1034.5" y="43.5" width="74" height="18" fill="#fff" stroke="#b0b0b0" stroke-width="1"/>
<rect x="1035.5" y="45" width="12" height="15" fill="#f4f4f4" stroke="#b5b5b5" stroke-width="1"/><path d="M1036 52.5h11" fill="none" stroke="#c8c8c8" stroke-width="1"/><path d="M1038.5 50.5l3 -3.5l3 3.5z" fill="#3b55a8"/><path d="M1038.5 54.5l3 3.5l3 -3.5z" fill="#3b55a8"/>
<text x="1054" y="55.7" font-size="10" fill="#000" textLength="42" lengthAdjust="spacingAndGlyphs">40,96 mm</text>
<text x="1116" y="55.7" font-size="10" fill="#1a1aff" font-weight="bold" textLength="9" lengthAdjust="spacingAndGlyphs">y:</text>
<path d="M1116 59.5H1125" fill="none" stroke="#1a1aff" stroke-width="1" stroke-dasharray="1 1"/>
<rect x="1129.5" y="43.5" width="74" height="18" fill="#fff" stroke="#b0b0b0" stroke-width="1"/>
<rect x="1130.5" y="45" width="12" height="15" fill="#f4f4f4" stroke="#b5b5b5" stroke-width="1"/><path d="M1131 52.5h11" fill="none" stroke="#c8c8c8" stroke-width="1"/><path d="M1133.5 50.5l3 -3.5l3 3.5z" fill="#3b55a8"/><path d="M1133.5 54.5l3 3.5l3 -3.5z" fill="#3b55a8"/>
<text x="1149.3" y="55.7" font-size="10" fill="#000" textLength="42" lengthAdjust="spacingAndGlyphs">16,86 mm</text>
<text x="1211.7" y="55.7" font-size="10" fill="#1a1aff" font-weight="bold" textLength="9" lengthAdjust="spacingAndGlyphs">B:</text>
<path d="M1211 59.5H1221" fill="none" stroke="#1a1aff" stroke-width="1" stroke-dasharray="1 1"/>
<rect x="1227.5" y="43.5" width="74.5" height="18" fill="#fff" stroke="#b0b0b0" stroke-width="1"/>
<rect x="1228.5" y="45" width="12" height="15" fill="#f4f4f4" stroke="#b5b5b5" stroke-width="1"/><path d="M1229 52.5h11" fill="none" stroke="#c8c8c8" stroke-width="1"/><path d="M1231.5 50.5l3 -3.5l3 3.5z" fill="#3b55a8"/><path d="M1231.5 54.5l3 3.5l3 -3.5z" fill="#3b55a8"/>
<text x="1247.3" y="55.7" font-size="10" fill="#000" textLength="46.7" lengthAdjust="spacingAndGlyphs">30,552 mm</text>
<text x="1323.3" y="55.7" font-size="10" fill="#1a1aff" font-weight="bold" textLength="9.5" lengthAdjust="spacingAndGlyphs">H:</text>
<path d="M1323 59.5H1333" fill="none" stroke="#1a1aff" stroke-width="1" stroke-dasharray="1 1"/>
<rect x="1337" y="43.5" width="74" height="18" fill="#fff" stroke="#b0b0b0" stroke-width="1"/>
<rect x="1338" y="45" width="12" height="15" fill="#f4f4f4" stroke="#b5b5b5" stroke-width="1"/><path d="M1338.5 52.5h11" fill="none" stroke="#c8c8c8" stroke-width="1"/><path d="M1341 50.5l3 -3.5l3 3.5z" fill="#3b55a8"/><path d="M1341 54.5l3 3.5l3 -3.5z" fill="#3b55a8"/>
<text x="1356" y="55.7" font-size="10" fill="#000" textLength="47.3" lengthAdjust="spacingAndGlyphs">26,458 mm</text>
<rect x="1309.5" y="46.5" width="5" height="12" fill="none" stroke="#444" stroke-width="1.6" rx="2.5"/>
<path d="M1312 50v5" fill="none" stroke="#222" stroke-width="1.6"/>
<path d="M1899.5 42.5h4l-2 2.5z" fill="#333"/>
<path d="M1905 41.5h8M1905 44.5h8M1905 47.5h8" fill="none" stroke="#333" stroke-width="1.4"/>
</svg>
<div class="a" style="left:5px;top:68px;width:59px;height:13px;background:linear-gradient(#5c5c5c,#3a3a3a);border-bottom:1px solid #222"></div>
<div class="a" style="left:5px;top:81px;width:59px;height:477px;background:#d6d6d6;border-left:1px solid #e8e8e8;border-top:1px solid #eee"></div>
<div class="a" style="left:30px;top:160px;width:33px;height:29px;border:5px solid #ff0000;border-radius:3px;background:linear-gradient(#bdbdbd,#d2d2d2)"></div>
<div class="a" style="left:7px;top:437px;width:56px;height:58px;border:5px solid #ff0000;border-radius:3px"></div>
<svg id="tools" class="a" style="left:0;top:0" width="1920" height="1040" viewBox="0 0 1920 1040" font-family="Liberation Sans, sans-serif">
<defs><linearGradient id="gh" x1="0" y1="0" x2="1" y2="0"><stop offset="0" stop-color="#fff"/><stop offset="1" stop-color="#111"/></linearGradient><linearGradient id="gv" x1="0" y1="0" x2="0" y2="1"><stop offset="0" stop-color="#fff"/><stop offset="1" stop-color="#999"/></linearGradient><linearGradient id="gstar" x1="0" y1="0" x2="0" y2="1"><stop offset="0" stop-color="#fff"/><stop offset="1" stop-color="#d0d0d0"/></linearGradient><radialGradient id="gs" cx=".4" cy=".35" r=".7"><stop offset="0" stop-color="#fff"/><stop offset="1" stop-color="#888"/></radialGradient></defs>
<path d="M11 72.5v5l-3.5-2.5zM15.5 72.5v5l-3.5-2.5z" fill="#e8e8e8"/>
<path d="M9 85h1v1h-1zM9 87h1v1h-1zM11 85h1v1h-1zM11 87h1v1h-1zM13 85h1v1h-1zM13 87h1v1h-1zM15 85h1v1h-1zM15 87h1v1h-1zM17 85h1v1h-1zM17 87h1v1h-1zM19 85h1v1h-1zM19 87h1v1h-1zM21 85h1v1h-1zM21 87h1v1h-1zM23 85h1v1h-1zM23 87h1v1h-1zM25 85h1v1h-1zM25 87h1v1h-1zM27 85h1v1h-1zM27 87h1v1h-1zM29 85h1v1h-1zM29 87h1v1h-1zM31 85h1v1h-1zM31 87h1v1h-1zM33 85h1v1h-1zM33 87h1v1h-1zM35 85h1v1h-1zM35 87h1v1h-1zM37 85h1v1h-1zM37 87h1v1h-1zM39 85h1v1h-1zM39 87h1v1h-1zM41 85h1v1h-1zM41 87h1v1h-1zM43 85h1v1h-1zM43 87h1v1h-1zM45 85h1v1h-1zM45 87h1v1h-1zM47 85h1v1h-1zM47 87h1v1h-1zM49 85h1v1h-1zM49 87h1v1h-1zM51 85h1v1h-1zM51 87h1v1h-1zM53 85h1v1h-1zM53 87h1v1h-1zM55 85h1v1h-1zM55 87h1v1h-1zM57 85h1v1h-1zM57 87h1v1h-1zM59 85h1v1h-1zM59 87h1v1h-1z" fill="#9c9c9c"/>
<path d="M8 140.5H61" fill="none" stroke="#a8a8a8" stroke-width="1"/>
<path d="M8 141.5H61" fill="none" stroke="#f2f2f2" stroke-width="1"/>
<path d="M8 229H61" fill="none" stroke="#a8a8a8" stroke-width="1"/>
<path d="M8 230H61" fill="none" stroke="#f2f2f2" stroke-width="1"/>
<path d="M8 295.5H61" fill="none" stroke="#a8a8a8" stroke-width="1"/>
<path d="M8 296.5H61" fill="none" stroke="#f2f2f2" stroke-width="1"/>
<path d="M8 341H61" fill="none" stroke="#a8a8a8" stroke-width="1"/>
<path d="M8 342H61" fill="none" stroke="#f2f2f2" stroke-width="1"/>
<path d="M8 367H61" fill="none" stroke="#a8a8a8" stroke-width="1"/>
<path d="M8 368H61" fill="none" stroke="#f2f2f2" stroke-width="1"/>
<path d="M8 413H61" fill="none" stroke="#a8a8a8" stroke-width="1"/>
<path d="M8 414H61" fill="none" stroke="#f2f2f2" stroke-width="1"/>
<path d="M8 511.5H61" fill="none" stroke="#a8a8a8" stroke-width="1"/>
<path d="M8 512.5H61" fill="none" stroke="#f2f2f2" stroke-width="1"/>
<path d="M8 533H61" fill="none" stroke="#a8a8a8" stroke-width="1"/>
<path d="M8 534H61" fill="none" stroke="#f2f2f2" stroke-width="1"/>
<path d="M17 101v11l2.7-2.4 2.3 5 2-.9-2.3-5 3.6-.3z" fill="#111"/>
<path d="M42.5 101.5v11l2.7-2.4 2.3 5 2-.9-2.3-5 3.6-.3z" fill="#fff" stroke="#111" stroke-width="1.1"/>
<path d="M58 117v-3.5l-3.5 3.5z" fill="#111"/>
<path d="M20.5 126.5L28.5 135" fill="none" stroke="#222" stroke-width="1.8"/>
<path d="M18.5 120.5v9M14 125h9M15.5 122l6 6M21.5 122l-6 6" fill="none" stroke="#444" stroke-width="0.8"/>
<ellipse cx="47" cy="126.5" rx="8" ry="4.3" fill="none" stroke="#222" stroke-width="1.2"/>
<path d="M40.5 129c-1.5 1-1 3 .5 3s1 2.5-.5 4" fill="none" stroke="#222" stroke-width="1"/>
<path d="M48 126.5v10l2.4-2.2 3.8-.2z" fill="#fff" stroke="#111" stroke-width="1"/>
<path d="M21.6 145c-1.2 3.2-3.6 5.3-3.6 8l1.8 3.6h3.6l1.8-3.6c0-2.700-2.400-4.800-3.600-8z" fill="#f4f4f4" stroke="#111" stroke-width="1.1"/>
<path d="M21.6 146v5.500" fill="none" stroke="#111" stroke-width="0.9"/>
<circle cx="21.600" cy="152.300" r="1" fill="#111"/>
<path d="M19 157.500h5.200v3.800h-5.200z" fill="#ddd" stroke="#111" stroke-width="1"/>
<text x="47" y="161" font-size="19" fill="#111" font-family="Liberation Serif, serif" font-weight="bold" text-anchor="middle" textLength="12.5" lengthAdjust="spacingAndGlyphs">T</text>
<path d="M15 169L28 181.500" fill="none" stroke="#111" stroke-width="1.3"/>
<path d="M47.50 169.00L49.91 173.48L54.92 174.39L51.40 178.07L52.08 183.11L47.50 180.90L42.92 183.11L43.60 178.07L40.08 174.39L45.09 173.48Z" fill="url(#gstar)" stroke="#444" stroke-width="1.4"/>
<path d="M30.500 190L22 197.500" fill="none" stroke="#333" stroke-width="1.6"/>
<path d="M22.500 196c-2 .5-5 3-7.500 5.500 3.500 0 7-1.500 9-4z" fill="#999" stroke="#222" stroke-width="0.9"/>
<path d="M52 190.500l2.500 2.500-11 9.500-4 1.500 1.500-4z" fill="#f0f0f0" stroke="#222" stroke-width="1"/>
<path d="M50 192.500l2.500 2.500" fill="none" stroke="#222" stroke-width="1"/>
<path d="M58 204.5v-3.5l-3.5 3.5z" fill="#111"/>
<path d="M13.500 213.500h8l5 4.500-1 3.500-3 2h-9z" fill="#eee" stroke="#222" stroke-width="1.2"/>
<path d="M30 209.500l-6 6" fill="none" stroke="#222" stroke-width="1.3"/>
<ellipse cx="22" cy="217" rx="4.500" ry="2.300" transform="rotate(-35 22 217)" fill="#999" stroke="#222" stroke-width=".9"/>
<path d="M45.500 212.500h9.500l-6 6.500h-9.500z" fill="#f4f4f4" stroke="#222" stroke-width="1"/>
<path d="M39.500 219v3h9.500l6-6.500v-3M49 219v3" fill="none" stroke="#222" stroke-width="1"/>
<path d="M58 226v-3.5l-3.5 3.5z" fill="#111"/>
<circle cx="22" cy="242" r="5.800" fill="none" stroke="#111" stroke-width="1.400" stroke-dasharray="1.500 2"/>
<path d="M18 237.500a5.800 5.800 0 0 1 9.500 3" fill="none" stroke="#111" stroke-width="1.4"/>
<path d="M16.500 237.500l4.500-2.500v4.500z" fill="#111"/>
<path d="M32.5 250.5v-3.5l-3.5 3.5z" fill="#111"/>
<rect x="39.5" y="235.5" width="12" height="9" fill="url(#gv)" stroke="#222" stroke-width="1.2"/>
<path d="M41.500 237.500l5.500 5.500M41.500 237.500h3.500M41.500 237.500v3.500" fill="none" stroke="#111" stroke-width="1.2"/>
<rect x="48.5" y="242.5" width="6" height="5.5" fill="#d8d8d8" stroke="#555" stroke-width="1"/>
<path d="M58 250.5v-3.5l-3.5 3.5z" fill="#111"/>
<path d="M13.500 263c2.500-3.500 5-1.500 7 1s5 1.500 4-3.500 2-4.500 4-3" fill="none" stroke="#666" stroke-width="2.8" stroke-linecap="round" opacity=".75"/>
<path d="M19 257.500l10.500 11.500" fill="none" stroke="#111" stroke-width="1"/>
<circle cx="19" cy="257.500" r="1.300" fill="#fff" stroke="#111" stroke-width=".8"/><circle cx="24.800" cy="263.800" r="1.800" fill="#fff" stroke="#111" stroke-width=".8"/><circle cx="29.500" cy="268.500" r="1.300" fill="#fff" stroke="#111" stroke-width=".8"/>
<path d="M33 271.5v-3.5l-3.5 3.5z" fill="#111"/>
<rect x="43.5" y="257.5" width="11" height="10.5" fill="none" stroke="#111" stroke-width="1.3" stroke-dasharray="1.500 1.500"/>
<rect x="42.3" y="256.3" width="2.4" height="2.4" fill="#111"/>
<rect x="47.8" y="256.3" width="2.4" height="2.4" fill="#111"/>
<rect x="53.3" y="256.3" width="2.4" height="2.4" fill="#111"/>
<rect x="53.3" y="261.3" width="2.4" height="2.4" fill="#111"/>
<rect x="53.3" y="266.8" width="2.4" height="2.4" fill="#111"/>
<rect x="47.8" y="266.8" width="2.4" height="2.4" fill="#111"/>
<rect x="42.3" y="266.8" width="2.4" height="2.4" fill="#111"/>
<path d="M39.500 257l7 5.500-7 4.500z" fill="#111"/>
<ellipse cx="18" cy="282.500" rx="4.500" ry="3.800" fill="#eee" stroke="#333" stroke-width="1"/><ellipse cx="22.500" cy="280.500" rx="4.500" ry="3.800" fill="#eee" stroke="#333" stroke-width="1"/><ellipse cx="21" cy="285" rx="4.500" ry="3.500" fill="#eee" stroke="#333" stroke-width="1"/>
<path d="M15.500 282.500h1M17.800 282.500h1M20 282.500h1" fill="none" stroke="#111" stroke-width="1.2"/>
<path d="M23.500 281.500v10l2.400-2.200 4-.2z" fill="#fff" stroke="#111" stroke-width="1"/>
<path d="M33 292.5v-3.5l-3.5 3.5z" fill="#111"/>
<path d="M40 277v13.500l14 1.500M40 277l10 3v10.800M40 283.500l10 1.500M45 278.500v12.500M40 290.500l14-2.500M40 289l14-4" fill="none" stroke="#333" stroke-width="1"/>
<path d="M58 292.5v-3.5l-3.5 3.5z" fill="#111"/>
<rect x="14.5" y="304.5" width="15" height="10" fill="url(#gv)" stroke="#222" stroke-width="1.2"/>
<path d="M14.500 309c5-3 10-2 15 0M22 304.500c-2 4-2 7 0 10M17 314.500c0-5 3-8 5-8s5 3 5 8" fill="none" stroke="#333" stroke-width="0.9"/>
<rect x="40.5" y="304.5" width="14.5" height="10" fill="url(#gh)" stroke="#222" stroke-width="1.2"/>
<path d="M15.500 337l1.500 .5 7.500-8-1.500-1.500-8 7.500z" fill="#f4f4f4" stroke="#222" stroke-width="1"/>
<path d="M23 327l3.500 3.500M24 328.500l3-3.500c1-1 3.500 1 2.500 2.500l-3 3z" fill="#444" stroke="#222" stroke-width="1.2"/>
<path d="M33 338.5v-3.5l-3.5 3.5z" fill="#111"/>
<rect x="39.5" y="322.5" width="5.5" height="5.5" fill="url(#gv)" stroke="#333" stroke-width="1"/>
<circle cx="51" cy="333.500" r="3.300" fill="url(#gs)" stroke="#555" stroke-width=".8"/>
<path d="M46 324.500h1M48 326.500h1M46 328h1M43 328.500h1M45 330h1M47 330h1M49 328.500h1M44 332h1M46 332.500h1" fill="none" stroke="#444" stroke-width="1"/>
<rect x="19.5" y="351.5" width="8.5" height="10.5" fill="url(#gv)" stroke="#222" stroke-width="1.2" rx="1.500"/>
<rect x="21.5" y="348.5" width="4" height="3" fill="#eee" stroke="#222" stroke-width="1"/>
<circle cx="23.500" cy="357" r="2.200" fill="#fff" stroke="#222" stroke-width="1"/><circle cx="23.500" cy="357" r=".8" fill="#222"/>
<path d="M13 348.500h1M15 347.500h1M17 348.500h1M13.500 350.500h1M15.500 350h1M18 350.500h1M14 352.500h1" fill="none" stroke="#333" stroke-width="1"/>
<path d="M33 364v-3.5l-3.5 3.5z" fill="#111"/>
<path d="M38.500 348v13.500H55" fill="none" stroke="#222" stroke-width="1.2"/>
<rect x="40.5" y="354.5" width="3" height="6.5" fill="#777" stroke="#333" stroke-width="0.8"/>
<rect x="45" y="353.5" width="3" height="7.5" fill="#999" stroke="#333" stroke-width="0.8"/>
<rect x="49.5" y="350.5" width="3.5" height="10.5" fill="url(#gv)" stroke="#333" stroke-width="0.8"/>
<path d="M58 364v-3.5l-3.5 3.5z" fill="#111"/>
<rect x="17.5" y="375.5" width="9" height="9" fill="#e0e0e0" stroke="#111" stroke-width="1.3"/>
<path d="M14 375.500h16M14 384.500h16M17.500 372v16M26.500 372v16" fill="none" stroke="#555" stroke-width="0.8" stroke-dasharray="1.500 1.200"/>
<path d="M38.500 386.500c4-1 8-4 10-8l-1.500-1.500c-2 4-5 7-8.500 9.500z" fill="#bbb" stroke="#222" stroke-width="1"/>
<path d="M46 379l9.500-6.500" fill="none" stroke="#333" stroke-width="2"/>
<path d="M45.500 374l5 6" fill="none" stroke="#222" stroke-width="1.2"/>
<path d="M58 388.5v-3.5l-3.5 3.5z" fill="#111"/>
<path d="M16.500 403.500c-1.500-2.500-3-3.500-2-4.500s2.500 .5 3.500 2l-1.500-5c-.3-1.500 1.500-2 2-.5l1.200 3.500-.2-4.500c0-1.500 2-1.500 2.200 0l.5 4.500.8-4c.3-1.500 2.200-1 2 .3l-.5 4.700 1-2.500c.5-1.300 2.200-.7 1.800 .7-1 3.500-1 6.500-2.500 9.500h-6z" fill="#fff" stroke="#222" stroke-width="1"/>
<path d="M33 408.5v-3.5l-3.5 3.5z" fill="#111"/>
<circle cx="44.500" cy="397.500" r="5" fill="url(#gs)" stroke="#333" stroke-width="1.300"/>
<path d="M48 401.500l5.500 6" fill="none" stroke="#222" stroke-width="2.2" stroke-linecap="round"/>
<path d="M26.500 418l3 3-12 11.500-3.500 .5 .5-3.500z" fill="#fff" stroke="#111" stroke-width="1.3"/>
<path d="M24.500 420l3 3" fill="none" stroke="#111" stroke-width="1.1"/>
<rect x="27.5" y="458.5" width="28.5" height="28.5" fill="#fff" stroke="#000" stroke-width="1.5"/>
<rect x="35.5" y="466.5" width="12" height="11.5" fill="#d6d6d6" stroke="#000" stroke-width="1.2"/>
<path d="M28.500 486.500L55.500 459.500" fill="none" stroke="#e0102a" stroke-width="2.6"/>
<rect x="13" y="443.5" width="29.5" height="29.5" fill="#000"/>
<rect x="14.2" y="444.7" width="27.1" height="27.1" fill="#fff"/>
<rect x="15.2" y="445.7" width="25.1" height="25.1" fill="#aabd27"/>
<path d="M49 446.500c3 0 5 2 5 5" fill="none" stroke="#333" stroke-width="1.4"/>
<path d="M47 446.500l3-2.500v5zM54 453.500l-2.500-3h5z" fill="#333"/>
<rect x="18.5" y="480.5" width="5" height="5" fill="#111" stroke="#111" stroke-width="1"/>
<rect x="14.5" y="476.5" width="5.5" height="5.5" fill="#fff" stroke="#111" stroke-width="1"/>
<rect x="10" y="495.5" width="14.5" height="13.5" fill="#c8c8c8" stroke="#777" stroke-width="1" rx="2.500"/>
<rect x="12.5" y="498" width="9" height="8.5" fill="#aabd27"/>
<rect x="29.5" y="497.5" width="9" height="9" fill="url(#gh)"/>
<rect x="47.8" y="497.5" width="9" height="9" fill="#fff"/>
<path d="M48 506.500L56.500 498" fill="none" stroke="#e0102a" stroke-width="1.8"/>
<rect x="10.5" y="514.5" width="15" height="15" fill="#c4c4c4" stroke="#666" stroke-width="1" rx="2.500"/>
<circle cx="17" cy="521.5" r="4.200" fill="url(#gs)" stroke="#333" stroke-width="1"/><rect x="17.5" y="523" width="5" height="5" fill="#777" stroke="#333" stroke-width="1"/>
<rect x="34.5" y="523" width="5.5" height="5.5" fill="#777" stroke="#333" stroke-width="1"/><circle cx="33.5" cy="521.5" r="4.400" fill="url(#gs)" stroke="#333" stroke-width="1"/>
<circle cx="51" cy="521.5" r="4.400" fill="url(#gs)" stroke="#333" stroke-width="1"/><path d="M51 521.5h4.400a4.400 4.400 0 0 1-4.400 4.400z" fill="#666"/>
<rect x="24" y="541.5" width="13.5" height="10" fill="#f6f6f6"/>
<path d="M24 551.500h13.500v-10" fill="none" stroke="#222" stroke-width="1.2"/>
<path d="M24.500 552v-10.500h13" fill="none" stroke="#bbb" stroke-width="1"/>
<rect x="31" y="537.5" width="13.5" height="10.5" fill="url(#gv)"/>
<rect x="31" y="537.5" width="13.5" height="2.5" fill="#8a8a8a"/>
<path d="M31 548h13.500v-10.500" fill="none" stroke="#111" stroke-width="1.4"/>
<path d="M31.500 548v-10.500" fill="none" stroke="#ccc" stroke-width="1"/>
</svg>
<div class="a" style="left:653px;top:467px;width:295px;height:178px;border-radius:7px;background:linear-gradient(90deg,rgba(255,255,255,.25),rgba(255,255,255,0) 8%,rgba(255,255,255,0) 20%,rgba(120,90,90,.18) 35%,rgba(255,255,255,0) 50%,rgba(255,255,255,.12) 75%,rgba(255,255,255,0) 92%,rgba(255,255,255,.2)),linear-gradient(#cfc0bd,#c1aeaa 20px,#c6b5b1 40px,#bda9a5);border:1px solid #2e2424;box-shadow:0 0 0 0 #000,inset 0 0 0 1px rgba(255,255,255,.55),3px 5px 11px 1px rgba(0,0,0,.6),0 0 3px rgba(0,0,0,.45)"></div>
<div class="a" style="left:660px;top:496px;width:282px;height:142px;background:#f0f0f0;border:1px solid #6e6262;box-shadow:0 0 0 1px rgba(255,255,255,.5),inset 0 0 0 1px #fbfbfb"></div>
<div class="a" style="left:676px;top:519px;width:153px;height:102px;border:1px solid #d5d5d5;border-radius:3px;box-shadow:inset 0 0 0 1px #fff"></div>
<div class="a" style="left:686px;top:512px;width:56px;height:14px;background:#f0f0f0"></div>
<div class="a" style="left:743px;top:530px;width:70px;height:20px;background:#fff;border:1px solid #e3e9ef;border-top-color:#abadb3"></div>
<div class="a" style="left:743px;top:560px;width:70px;height:20px;background:#fff;border:1px solid #e3e9ef;border-top-color:#abadb3"></div>
<div class="a" style="left:689px;top:585px;width:130px;height:30px;border:5px solid #ff0000;border-radius:2px"></div>
<div class="a" style="left:743px;top:590px;width:70px;height:20px;background:#fff;border:1px solid #b5cfe7;border-top-color:#3d7bad"></div>
<div class="a" style="left:846px;top:519px;width:78px;height:18px;border:1px solid #707070;border-radius:3px;background:linear-gradient(#f4f4f4,#ebebeb 48%,#dddddd 52%,#cfcfcf);box-shadow:inset 0 0 0 1px #fcfcfc"></div>
<div class="a" style="left:846px;top:549px;width:78px;height:18px;border:1px solid #707070;border-radius:3px;background:linear-gradient(#f4f4f4,#ebebeb 48%,#dddddd 52%,#cfcfcf);box-shadow:inset 0 0 0 1px #fcfcfc"></div>
<svg id="dlg" class="a" style="left:0;top:0" width="1920" height="1040" viewBox="0 0 1920 1040" font-family="Liberation Sans, sans-serif">
<defs><filter id="glow" x="-20%" y="-50%" width="140%" height="200%"><feGaussianBlur stdDeviation="2.500"/></filter></defs>
<rect x="658" y="475" width="36" height="14" fill="#fff" filter="url(#glow)" opacity=".55"/>
<text x="661.3" y="485.8" font-size="12" fill="#000" textLength="27" lengthAdjust="spacingAndGlyphs">Stern</text>
<text x="690.8" y="522.3" font-size="12" fill="#000" textLength="46.2" lengthAdjust="spacingAndGlyphs">Optionen</text>
<text x="692.3" y="543.8" font-size="12" fill="#000" textLength="46" lengthAdjust="spacingAndGlyphs">Radius 1:</text>
<text x="692.3" y="573.8" font-size="12" fill="#000" textLength="46" lengthAdjust="spacingAndGlyphs">Radius 2:</text>
<text x="697.5" y="603.8" font-size="12" fill="#000" textLength="41" lengthAdjust="spacingAndGlyphs">Zacken:</text>
<text x="749" y="544.5" font-size="12" fill="#000" textLength="58.5" lengthAdjust="spacingAndGlyphs">,8194 mm</text>
<path d="M748.500 538.500v6" fill="none" stroke="#000" stroke-width="1"/>
<text x="749.5" y="574.5" font-size="12" fill="#000" textLength="55.5" lengthAdjust="spacingAndGlyphs">17,64 mm</text>
<text x="763" y="604.5" font-size="12" fill="#000">3</text>
<rect x="744.5" y="591.5" width="12" height="17" fill="#f4f4f4" stroke="#b5b5b5" stroke-width="1"/><path d="M745 600h11" fill="none" stroke="#c8c8c8" stroke-width="1"/><path d="M747.5 598l3 -3.5l3 3.5z" fill="#3b55a8"/><path d="M747.5 602l3 3.5l3 -3.5z" fill="#3b55a8"/>
<text x="885" y="532.3" font-size="12" fill="#000" text-anchor="middle" textLength="15.5" lengthAdjust="spacingAndGlyphs">OK</text>
<text x="885" y="562.3" font-size="12" fill="#000" text-anchor="middle" textLength="54.5" lengthAdjust="spacingAndGlyphs">Abbrechen</text>
</svg>
<div class="a" style="left:1701px;top:68px;width:214px;height:13px;background:linear-gradient(#5c5c5c,#3a3a3a);border-bottom:1px solid #222"></div>
<div class="a" style="left:1700px;top:68px;width:1px;height:967px;background:#3c3c3c"></div>
<div class="a" style="left:1701px;top:81px;width:214px;height:118px;background:#d6d6d6"></div>
<div class="a" style="left:1701px;top:81px;width:214px;height:17px;background:linear-gradient(#929292,#7c7c7c);border-bottom:1px solid #5e5e5e"></div>
<div class="a" style="left:1701px;top:81px;width:49px;height:17px;background:linear-gradient(#ececec,#d6d6d6);border-right:1px solid #6a6a6a"></div>
<div class="a" style="left:1811px;top:81px;width:1px;height:16px;background:#666"></div>
<div class="a" style="left:1812px;top:81px;width:1px;height:16px;background:#9a9a9a"></div>
<div class="a" style="left:1868px;top:81px;width:1px;height:16px;background:#666"></div>
<div class="a" style="left:1869px;top:81px;width:1px;height:16px;background:#9a9a9a"></div>
<div class="a" style="left:1701px;top:202px;width:214px;height:250px;background:#d6d6d6"></div>
<div class="a" style="left:1701px;top:202px;width:214px;height:17px;background:linear-gradient(#929292,#7c7c7c);border-bottom:1px solid #5e5e5e"></div>
<div class="a" style="left:1701px;top:202px;width:41px;height:17px;background:linear-gradient(#ececec,#d6d6d6);border-right:1px solid #6a6a6a"></div>
<div class="a" style="left:1797px;top:202px;width:1px;height:16px;background:#666"></div>
<div class="a" style="left:1798px;top:202px;width:1px;height:16px;background:#9a9a9a"></div>
<div class="a" style="left:1861px;top:202px;width:1px;height:16px;background:#666"></div>
<div class="a" style="left:1862px;top:202px;width:1px;height:16px;background:#9a9a9a"></div>
<div class="a" style="left:1701px;top:455px;width:214px;height:273px;background:#d6d6d6"></div>
<div class="a" style="left:1701px;top:455px;width:214px;height:17px;background:linear-gradient(#929292,#7c7c7c);border-bottom:1px solid #5e5e5e"></div>
<div class="a" style="left:1701px;top:455px;width:47px;height:17px;background:linear-gradient(#ececec,#d6d6d6);border-right:1px solid #6a6a6a"></div>
<div class="a" style="left:1798px;top:455px;width:1px;height:16px;background:#666"></div>
<div class="a" style="left:1799px;top:455px;width:1px;height:16px;background:#9a9a9a"></div>
<div class="a" style="left:1844px;top:455px;width:1px;height:16px;background:#666"></div>
<div class="a" style="left:1845px;top:455px;width:1px;height:16px;background:#9a9a9a"></div>
<div class="a" style="left:1701px;top:731px;width:214px;height:162px;background:#d6d6d6"></div>
<div class="a" style="left:1701px;top:731px;width:214px;height:17px;background:linear-gradient(#929292,#7c7c7c);border-bottom:1px solid #5e5e5e"></div>
<div class="a" style="left:1701px;top:731px;width:58px;height:17px;background:linear-gradient(#ececec,#d6d6d6);border-right:1px solid #6a6a6a"></div>
<div class="a" style="left:1807px;top:731px;width:1px;height:16px;background:#666"></div>
<div class="a" style="left:1808px;top:731px;width:1px;height:16px;background:#9a9a9a"></div>
<div class="a" style="left:1875px;top:731px;width:1px;height:16px;background:#666"></div>
<div class="a" style="left:1876px;top:731px;width:1px;height:16px;background:#9a9a9a"></div>
<div class="a" style="left:1701px;top:896px;width:214px;height:139px;background:#d6d6d6"></div>
<div class="a" style="left:1701px;top:896px;width:214px;height:17px;background:linear-gradient(#929292,#7c7c7c);border-bottom:1px solid #5e5e5e"></div>
<div class="a" style="left:1701px;top:896px;width:73px;height:17px;background:linear-gradient(#ececec,#d6d6d6);border-right:1px solid #6a6a6a"></div>
<div class="a" style="left:1838px;top:896px;width:1px;height:16px;background:#666"></div>
<div class="a" style="left:1839px;top:896px;width:1px;height:16px;background:#9a9a9a"></div>
<div class="a" style="left:1757px;top:106px;width:101px;height:6px;border:1px solid #000;background:linear-gradient(90deg,#ffed00,#a8c520 50%,#009a4e)"></div>
<div class="a" style="left:1757px;top:124px;width:101px;height:6px;border:1px solid #000;background:linear-gradient(90deg,#a6cf2a,#b8892c 55%,#c8322c)"></div>
<div class="a" style="left:1757px;top:142px;width:101px;height:6px;border:1px solid #000;background:linear-gradient(90deg,#a8c8ee,#a9c691 50%,#aabd27)"></div>
<div class="a" style="left:1757px;top:160px;width:101px;height:6px;border:1px solid #000;background:linear-gradient(90deg,#abbf27,#5a6414 55%,#0c0d04)"></div>
<div class="a" style="left:1864px;top:101px;width:33px;height:17px;background:#fff"></div>
<div class="a" style="left:1864px;top:119px;width:33px;height:17px;background:#fff"></div>
<div class="a" style="left:1864px;top:137px;width:33px;height:17px;background:#fff"></div>
<div class="a" style="left:1864px;top:155px;width:33px;height:17px;background:#fff"></div>
<div class="a" style="left:1706px;top:174px;width:200px;height:17px;border:1px solid #000;background:#fff"></div>
<div class="a" style="left:1722px;top:175px;width:168px;height:15px;background:linear-gradient(rgba(255,255,255,.95),rgba(255,255,255,0) 45%,rgba(0,0,0,0) 55%,rgba(0,0,0,1)),linear-gradient(90deg,#e0001a,#f7941d 7%,#fff200 14%,#8dc63f 24%,#39b54a 34%,#00a99d 44%,#29abe2 52%,#2e3192 66%,#662d91 76%,#c0148c 86%,#ed145b 94%,#e0001a)"></div>
<div class="a" style="left:1890px;top:182px;width:15px;height:8px;background:#000"></div>
<div class="a" style="left:1703px;top:221px;width:195px;height:214px;background:#fff"></div>
<div class="a" style="left:1898px;top:221px;width:16px;height:213px;background:#ececec"></div>
<div class="a" style="left:1899px;top:239px;width:14px;height:14px;background:linear-gradient(90deg,#f6f6f6,#d0d0d0);border:1px solid #9a9a9a;border-radius:2px"></div>
<div class="a" style="left:1898px;top:474px;width:16px;height:236px;background:#ececec"></div>
<div class="a" style="left:1763px;top:475px;width:134px;height:19px;background:#3399ff"></div>
<div class="a" style="left:1898px;top:750px;width:16px;height:126px;background:#e4e4e4"></div>
<div class="a" style="left:1777px;top:1008px;width:53px;height:19px;background:#dedede;border:1px solid #f2f2f2;box-shadow:0 0 0 1px #bcbcbc inset"></div>
<svg id="dock" class="a" style="left:0;top:0" width="1920" height="1040" viewBox="0 0 1920 1040" font-family="Liberation Sans, sans-serif">
<defs><linearGradient id="gbox" x1="0" y1="0" x2="1" y2="1"><stop offset="0" stop-color="#fff"/><stop offset="1" stop-color="#8e8e8e"/></linearGradient></defs>
<defs><linearGradient id="gvd" x1="0" y1="0" x2="0" y2="1"><stop offset="0" stop-color="#fff"/><stop offset="1" stop-color="#999"/></linearGradient></defs>
<path d="M1905 72.500v5l3.500-2.500zM1909.500 72.500v5l3.500-2.500z" fill="#e8e8e8"/>
<text x="1713.5" y="92.3" font-size="9.3" fill="#2e2e2e" font-weight="bold" textLength="24.7" lengthAdjust="spacingAndGlyphs">Farbe</text>
<text x="1757.3" y="93.3" font-size="9.3" fill="#b0b0b0" font-weight="bold" textLength="46.7" lengthAdjust="spacingAndGlyphs">Farbfelder</text>
<text x="1757.3" y="92.3" font-size="9.3" fill="#2e2e2e" font-weight="bold" textLength="46.7" lengthAdjust="spacingAndGlyphs">Farbfelder</text>
<text x="1819.4" y="93.3" font-size="9.3" fill="#b0b0b0" font-weight="bold" textLength="40.9" lengthAdjust="spacingAndGlyphs">Farbhilfe</text>
<text x="1819.4" y="92.3" font-size="9.3" fill="#2e2e2e" font-weight="bold" textLength="40.9" lengthAdjust="spacingAndGlyphs">Farbhilfe</text>
<path d="M1897.500 87h5l-2.500 3z" fill="#222"/>
<path d="M1904 86.5h8M1904 89.5h8M1904 92.5h8" fill="none" stroke="#222" stroke-width="1.3"/>
<path d="M1705 88.500l2.500-2.500 2.500 2.500zM1705 90.500l2.500 2.500 2.500-2.500z" fill="#222"/>
<text x="1708.5" y="213.8" font-size="9.3" fill="#2e2e2e" font-weight="bold" textLength="26.3" lengthAdjust="spacingAndGlyphs">Pinsel</text>
<text x="1749.2" y="214.8" font-size="9.3" fill="#b0b0b0" font-weight="bold" textLength="40" lengthAdjust="spacingAndGlyphs">Symbole</text>
<text x="1749.2" y="213.8" font-size="9.3" fill="#2e2e2e" font-weight="bold" textLength="40" lengthAdjust="spacingAndGlyphs">Symbole</text>
<text x="1805.4" y="214.8" font-size="9.3" fill="#b0b0b0" font-weight="bold" textLength="48.1" lengthAdjust="spacingAndGlyphs">Grafikstile</text>
<text x="1805.4" y="213.8" font-size="9.3" fill="#2e2e2e" font-weight="bold" textLength="48.1" lengthAdjust="spacingAndGlyphs">Grafikstile</text>
<path d="M1897.500 208.5h5l-2.500 3z" fill="#222"/>
<path d="M1904 208h8M1904 211h8M1904 214h8" fill="none" stroke="#222" stroke-width="1.3"/>
<text x="1708.3" y="466.5" font-size="9.3" fill="#2e2e2e" font-weight="bold" textLength="32.3" lengthAdjust="spacingAndGlyphs">Ebenen</text>
<text x="1755" y="467.5" font-size="9.3" fill="#b0b0b0" font-weight="bold" textLength="35.5" lengthAdjust="spacingAndGlyphs">Zeichen</text>
<text x="1755" y="466.5" font-size="9.3" fill="#2e2e2e" font-weight="bold" textLength="35.5" lengthAdjust="spacingAndGlyphs">Zeichen</text>
<text x="1806.3" y="467.5" font-size="9.3" fill="#b0b0b0" font-weight="bold" textLength="30.3" lengthAdjust="spacingAndGlyphs">Absatz</text>
<text x="1806.3" y="466.5" font-size="9.3" fill="#2e2e2e" font-weight="bold" textLength="30.3" lengthAdjust="spacingAndGlyphs">Absatz</text>
<path d="M1897.500 461.5h5l-2.500 3z" fill="#222"/>
<path d="M1904 461h8M1904 464h8M1904 467h8" fill="none" stroke="#222" stroke-width="1.3"/>
<text x="1708.3" y="743" font-size="9.3" fill="#2e2e2e" font-weight="bold" textLength="43.1" lengthAdjust="spacingAndGlyphs">Aussehen</text>
<text x="1766.8" y="744" font-size="9.3" fill="#b0b0b0" font-weight="bold" textLength="32.6" lengthAdjust="spacingAndGlyphs">Verlauf</text>
<text x="1766.8" y="743" font-size="9.3" fill="#2e2e2e" font-weight="bold" textLength="32.6" lengthAdjust="spacingAndGlyphs">Verlauf</text>
<text x="1815.4" y="744" font-size="9.3" fill="#b0b0b0" font-weight="bold" textLength="55.4" lengthAdjust="spacingAndGlyphs">Transparenz</text>
<text x="1815.4" y="743" font-size="9.3" fill="#2e2e2e" font-weight="bold" textLength="55.4" lengthAdjust="spacingAndGlyphs">Transparenz</text>
<path d="M1897.500 738h5l-2.500 3z" fill="#222"/>
<path d="M1904 737.5h8M1904 740.5h8M1904 743.5h8" fill="none" stroke="#222" stroke-width="1.3"/>
<text x="1713.2" y="907.7" font-size="9.3" fill="#2e2e2e" font-weight="bold" textLength="49.8" lengthAdjust="spacingAndGlyphs">Ausrichten</text>
<text x="1781.5" y="908.7" font-size="9.3" fill="#b0b0b0" font-weight="bold" textLength="48.3" lengthAdjust="spacingAndGlyphs">Pathfinder</text>
<text x="1781.5" y="907.7" font-size="9.3" fill="#2e2e2e" font-weight="bold" textLength="48.3" lengthAdjust="spacingAndGlyphs">Pathfinder</text>
<path d="M1897.500 902.5h5l-2.500 3z" fill="#222"/>
<path d="M1904 902h8M1904 905h8M1904 908h8" fill="none" stroke="#222" stroke-width="1.3"/>
<path d="M1705 904l2.500-2.500 2.500 2.500zM1705 906l2.500 2.500 2.500-2.500z" fill="#222"/>
<rect x="1714.5" y="114.5" width="18" height="18" fill="#fff" stroke="#000" stroke-width="1.3"/>
<rect x="1720" y="120" width="7" height="7" fill="#d6d6d6" stroke="#000" stroke-width="1.3"/>
<path d="M1715 132L1732.500 115" fill="none" stroke="#e0102a" stroke-width="2"/>
<rect x="1705" y="105.2" width="19" height="18.5" fill="#000"/>
<rect x="1706" y="106.2" width="17" height="16.5" fill="#aabd27"/>
<path d="M1711.500 139l5 2.500v6l-5 2.500-5-2.500v-6z" fill="#f4f4f4" stroke="#222" stroke-width="1"/>
<path d="M1706.500 141.500l5 2.500v6l-5-2.500z" fill="#6a6a6a"/>
<path d="M1706.500 141.500l5-2.500 5 2.500-5 2.500z" fill="#c4c4c4"/>
<path d="M1706.500 141.500l5 2.500 5-2.500M1711.500 144v6" fill="none" stroke="#222" stroke-width="1"/>
<rect x="1720.5" y="138" width="14" height="13" fill="#000"/>
<rect x="1721.8" y="139.3" width="11.4" height="10.4" fill="#9bc531"/>
<text x="1748.5" y="112.9" font-size="10" fill="#000" text-anchor="middle">C</text>
<text x="1748.5" y="130.9" font-size="10" fill="#000" text-anchor="middle">M</text>
<text x="1748.5" y="148.9" font-size="10" fill="#000" text-anchor="middle">Y</text>
<text x="1748.5" y="167" font-size="10" fill="#000" text-anchor="middle">K</text>
<text x="1869.4" y="112.9" font-size="10" fill="#000" textLength="22.6" lengthAdjust="spacingAndGlyphs">38,93</text>
<text x="1899.6" y="112.9" font-size="10" fill="#000" textLength="9.2" lengthAdjust="spacingAndGlyphs">%</text>
<path d="M1796.3 112.9l-4.200 4.500h8.400z" fill="#e8e8e0" stroke="#888" stroke-width="0.9"/>
<text x="1869.4" y="130.9" font-size="10" fill="#000" textLength="22.6" lengthAdjust="spacingAndGlyphs">12,04</text>
<text x="1899.6" y="130.9" font-size="10" fill="#000" textLength="9.2" lengthAdjust="spacingAndGlyphs">%</text>
<path d="M1769.4 130.9l-4.200 4.500h8.400z" fill="#e8e8e0" stroke="#888" stroke-width="0.9"/>
<text x="1869.4" y="148.9" font-size="10" fill="#000" textLength="22.6" lengthAdjust="spacingAndGlyphs">96,63</text>
<text x="1899.6" y="148.9" font-size="10" fill="#000" textLength="9.2" lengthAdjust="spacingAndGlyphs">%</text>
<path d="M1854.6 148.9l-4.200 4.500h8.400z" fill="#e8e8e0" stroke="#888" stroke-width="0.9"/>
<text x="1869.4" y="167" font-size="10" fill="#000" textLength="17.5" lengthAdjust="spacingAndGlyphs">0,92</text>
<text x="1899.6" y="167" font-size="10" fill="#000" textLength="9.2" lengthAdjust="spacingAndGlyphs">%</text>
<path d="M1758.5 167l-4.200 4.500h8.400z" fill="#e8e8e0" stroke="#888" stroke-width="0.9"/>
<path d="M1707 190L1722 175.500" fill="none" stroke="#e0102a" stroke-width="1.8"/>
<path d="M1722.500 175v15" fill="none" stroke="#000" stroke-width="1"/>
<path d="M1734.5 221v31M1766.5 221v31M1798.5 221v31M1830.5 221v31M1862.5 221v31M1894.5 221v31M1703 252.5H1898M1703 284.5H1898M1703 316.5H1898M1703 348.5H1898M1703 380.5H1898M1703 412.5H1898" fill="none" stroke="#000" stroke-width="1"/>
<path d="M1703 220.500H1898" fill="none" stroke="#000" stroke-width="1"/>
<rect x="1717.5" y="235.5" width="1.5" height="1" fill="#000"/>
<ellipse cx="1750.700" cy="236" rx="2.300" ry="1.300" fill="#000" transform="rotate(15 1750.700 236)"/>
<path d="M1782.500 233.500v5" fill="none" stroke="#aaa" stroke-width="1"/>
<circle cx="1814.500" cy="236" r="1.400" fill="#000"/><circle cx="1846.200" cy="236.500" r="3.600" fill="#000"/><circle cx="1878.200" cy="236.500" r="7.600" fill="#000"/>
<path d="M1709 268.200H1857" fill="none" stroke="#000" stroke-width="2.6"/>
<text x="1863.8" y="271.8" font-size="10" fill="#000" textLength="31.2" lengthAdjust="spacingAndGlyphs">Einfach</text>
<path d="M1710 300.200c30-1.200 60 .3 90-.4s60-.8 92-.3c-30 1.200-60 .6-90 1s-62 1.100-92-.3z" fill="#111" stroke="#111" stroke-width="1.2"/>
<path d="M1709 332c15-3.500 40-4 90-4s80 1 93 4c-13 3-43 4-93 4s-75-.5-90-4z" fill="#000"/>
<path d="M1709 364.500c30-2.500 60-1.500 85-2.500 8-2.500 6-4.500 10-5 4 .5 2 3 10 1.500 18-3.500 30-7 42-4.500 12 1 26 3 35.500 12-10-5-22-6-32-4-13 2-22 6-38 7 2 2.500-6 3.500-12 1.500-5-2-10-3.500-16-4-25-.5-55 0-84.500-2z" fill="#000"/>
<path d="M1715 411v-11c0-2.500 1.500-4 4-4h79M1800 399h16v-18" fill="none" stroke="#111" stroke-width="8"/>
<path d="M1715 411.500v-11.500c0-2.500 1.500-4 4-4h79M1800 399h16v-18.500" fill="none" stroke="#d8202c" stroke-width="4.3"/>
<rect x="1831" y="392" width="41" height="9" fill="#111"/>
<rect x="1834" y="394.7" width="38" height="3.6" fill="#d8202c"/>
<path d="M1872 385.500l20.500 11-20.500 11z" fill="#c8202a" stroke="#111" stroke-width="2"/>
<path d="M1734.5 381v3M1734.5 409.500v6.500M1766.5 381v3M1766.5 409.500v6.500M1798.5 381v3M1798.5 409.500v6.500M1830.5 381v3M1830.5 409.500v6.500M1862.5 381v3M1862.5 409.500v6.500" fill="none" stroke="#000" stroke-width="1"/>
<path d="M1734.500 392v9M1766.500 392v9M1798.500 392v9M1862.500 392v9" fill="none" stroke="#fff" stroke-width="1"/>
<g fill="none" stroke="#3c3c46" stroke-width="1.800" stroke-linecap="round"><path d="M1715 434c-7-3-10-9-9-15 3-5 9-5 12-1 2 4-1 8-5 7-3-1-3-5 0-5"/><path d="M1719 434c7-3 10-9 9-15-3-5-9-5-12-1-2 4 1 8 5 7 3-1 3-5 0-5"/><path d="M1717 416c-4 3-4 10 0 16M1704 415l11 9M1730 415l-11 9M1720 429c3 2 6 2 9 0M1714 429c-3 2-6 2-9 0M1712 417v14M1722 417v14"/><circle cx="1708" cy="420" r="2.200"/><circle cx="1726" cy="420" r="2.200"/><path d="M1709 426h16M1712 422h10M1711 430h12"/></g>
<g fill="none" stroke="#3c3c46" stroke-width="1.800" stroke-linecap="round"><path d="M1814 434c-7-3-10-9-9-15 3-5 9-5 12-1 2 4-1 8-5 7-3-1-3-5 0-5"/><path d="M1818 434c7-3 10-9 9-15-3-5-9-5-12-1-2 4 1 8 5 7 3-1 3-5 0-5"/><path d="M1816 416c-4 3-4 10 0 16M1803 415l11 9M1829 415l-11 9M1819 429c3 2 6 2 9 0M1813 429c-3 2-6 2-9 0M1811 417v14M1821 417v14"/><circle cx="1807" cy="420" r="2.200"/><circle cx="1825" cy="420" r="2.200"/><path d="M1808 426h16M1811 422h10M1810 430h12"/></g>
<path d="M1730 423H1803" fill="none" stroke="#4a4a4a" stroke-width="1.4"/>
<path d="M1730 433.200H1803" fill="none" stroke="#2a2a2a" stroke-width="2"/>
<path d="M1730 428.700H1803" fill="none" stroke="#8a8070" stroke-width="0.8"/>
<ellipse cx="1746" cy="428.700" rx="4.5" ry="1.500" fill="#6a6050"/>
<ellipse cx="1757.5" cy="428.700" rx="2.5" ry="1.500" fill="#6a6050"/>
<ellipse cx="1777" cy="428.700" rx="4.5" ry="1.500" fill="#6a6050"/>
<ellipse cx="1789" cy="428.700" rx="2.5" ry="1.500" fill="#6a6050"/>
<path d="M1734.500 419v15M1766.500 419v15" fill="none" stroke="#fff" stroke-width="1"/>
<path d="M1703 434.500H1898" fill="none" stroke="#000" stroke-width="1"/>
<path d="M1902 232.500h8l-4-4zM1902 425h8l-4 4z" fill="#444"/>
<rect x="1713.5" y="437.5" width="7" height="6" fill="#eee" stroke="#333" stroke-width="1"/>
<rect x="1716.5" y="440.5" width="7" height="6" fill="#ccc" stroke="#333" stroke-width="1"/>
<path d="M1726 448v-2.500l-2.500 2.500z" fill="#222"/>
<path d="M1780 437l9 10M1789 437l-9 10" fill="none" stroke="#9a9a9a" stroke-width="1.4"/>
<path d="M1806 447l8-10M1812 441h9M1814 444.500h7M1812 448h9" fill="none" stroke="#9a9a9a" stroke-width="1.3"/>
<rect x="1849.5" y="438.5" width="8" height="8" fill="#f4f4f4" stroke="#333" stroke-width="1"/>
<rect x="1849.5" y="442.5" width="4" height="4" fill="#ccc" stroke="#333" stroke-width="1"/>
<path d="M1880.500 440.500h6v6.500h-6zM1879 439.500h9M1882 438h3" fill="#eee" stroke="#222" stroke-width="1.1"/>
<path d="M1882.500 442v4M1884.500 442v4" fill="none" stroke="#222" stroke-width="0.8"/>
<path d="M1903 447h1M1906 447h1M1909 447h1M1906 444h1M1909 444h1M1909 441h1" fill="none" stroke="#999" stroke-width="1"/>
<rect x="1703.5" y="475.5" width="17" height="17" fill="#e2e2e2" stroke="#bdbdbd" stroke-width="1"/>
<rect x="1723.5" y="475.5" width="12" height="17" fill="#e2e2e2" stroke="#bdbdbd" stroke-width="1"/>
<path d="M1706 484c3-4.500 10-4.500 13 0c-3 3.500-10 3.500-13 0z" fill="#fff" stroke="#111" stroke-width="1.400"/><circle cx="1712.5" cy="483.8" r="2.700" fill="#111"/><path d="M1706.5 481.5c3-4 9-4 12 0" fill="none" stroke="#111" stroke-width="1.600"/>
<rect x="1703.5" y="495.5" width="17" height="17" fill="#e2e2e2" stroke="#bdbdbd" stroke-width="1"/>
<rect x="1723.5" y="495.5" width="12" height="17" fill="#e2e2e2" stroke="#bdbdbd" stroke-width="1"/>
<path d="M1706 504c3-4.500 10-4.500 13 0c-3 3.500-10 3.500-13 0z" fill="#fff" stroke="#111" stroke-width="1.400"/><circle cx="1712.5" cy="503.8" r="2.700" fill="#111"/><path d="M1706.5 501.5c3-4 9-4 12 0" fill="none" stroke="#111" stroke-width="1.600"/>
<rect x="1739" y="476" width="4" height="16" fill="#0d9444"/>
<rect x="1739" y="496" width="4" height="16" fill="#f25a12"/>
<path d="M1747.500 474v39" fill="none" stroke="#000" stroke-width="1"/>
<path d="M1703 513.500H1897M1703 710.500H1897M1703 473.500H1897" fill="none" stroke="#000" stroke-width="1"/>
<path d="M1703 494.500H1747" fill="none" stroke="#999" stroke-width="1"/>
<rect x="1726.5" y="503.5" width="7" height="6" fill="#444" stroke="#111" stroke-width="1"/>
<path d="M1728 503.500v-2a2 2 0 0 1 4 0v2" fill="none" stroke="#111" stroke-width="1.3"/>
<path d="M1752.500 479.5v9l5-4.500z" fill="#f4f4f4" stroke="#445" stroke-width="1"/>
<path d="M1752.500 499.5v9l5-4.500z" fill="#f4f4f4" stroke="#445" stroke-width="1"/>
<rect x="1765.5" y="476.5" width="15" height="15" fill="#fff" stroke="#000" stroke-width="1.2"/>
<rect x="1767" y="478" width="12" height="4.5" fill="#8d90a0"/>
<rect x="1768" y="483" width="10" height="7.5" fill="#e0e0e0"/>
<rect x="1769" y="478.5" width="3" height="2" fill="#aabd27"/>
<rect x="1765.5" y="496.5" width="15" height="15" fill="#fff" stroke="#000" stroke-width="1.2"/>
<path d="M1766 498v13" fill="none" stroke="#f25a12" stroke-width="1"/>
<path d="M1779 505v4" fill="none" stroke="#555" stroke-width="1"/>
<text x="1785.3" y="486.7" font-size="10" fill="#fff" font-weight="bold" textLength="62.6" lengthAdjust="spacingAndGlyphs">Meine Ebene</text>
<text x="1785.3" y="506.9" font-size="10" fill="#000" textLength="33.7" lengthAdjust="spacingAndGlyphs">Vorlage</text>
<circle cx="1878.400" cy="484" r="4" fill="none" stroke="#1a2a4a" stroke-width="1.200"/><circle cx="1878.400" cy="504" r="4" fill="#e4e4e4" stroke="#333" stroke-width="1.200"/>
<rect x="1889" y="481.5" width="5" height="5" fill="#0d9444"/>
<path d="M1892.500 475h4.500v4.500z" fill="#000"/>
<path d="M1902 485.500h8l-4-4z" fill="#aaa"/>
<path d="M1902 700.500h8l-4 4z" fill="#aaa"/>
<text x="1712.3" y="720.6" font-size="10" fill="#000" textLength="41.2" lengthAdjust="spacingAndGlyphs">2 Ebenen</text>
<circle cx="1790" cy="719" r="3.800" fill="#eee" stroke="#333" stroke-width="1"/>
<path d="M1790 719v-3.800a3.800 3.800 0 0 1 3.800 3.800z" fill="#333"/>
<rect x="1783.5" y="713.5" width="4" height="3" fill="#eee" stroke="#555" stroke-width="0.8"/>
<path d="M1812 718h5M1815 716l2.500 2-2.500 2" fill="none" stroke="#222" stroke-width="1.2"/>
<rect x="1819.5" y="714.5" width="7" height="8" fill="#f4f4f4" stroke="#333" stroke-width="1"/>
<rect x="1819.5" y="718.5" width="4" height="4" fill="#ccc" stroke="#333" stroke-width="1"/>
<rect x="1847.5" y="714.5" width="8" height="8" fill="#f4f4f4" stroke="#333" stroke-width="1"/>
<rect x="1847.5" y="718.5" width="4" height="4" fill="#ccc" stroke="#333" stroke-width="1"/>
<path d="M1879.500 716.500h6v6.500h-6zM1878 715.500h9M1881 714h3" fill="#eee" stroke="#222" stroke-width="1.1"/>
<path d="M1881.500 718v4M1883.500 718v4" fill="none" stroke="#222" stroke-width="0.8"/>
<path d="M1903 724h1M1906 724h1M1909 724h1M1906 721h1M1909 721h1M1909 718h1" fill="none" stroke="#999" stroke-width="1"/>
<path d="M1703 797.500H1897M1703 821.500H1897" fill="none" stroke="#f4f4f4" stroke-width="1"/>
<path d="M1703 773.500H1897" fill="none" stroke="#000" stroke-width="1"/>
<path d="M1703 749.500H1897" fill="none" stroke="#000" stroke-width="1"/>
<path d="M1703 845.500H1897M1703 875.500H1897" fill="none" stroke="#000" stroke-width="1"/>
<path d="M1724.500 774v72" fill="none" stroke="#000" stroke-width="1"/>
<rect x="1705.5" y="752.5" width="19" height="19" fill="#fff" stroke="#000" stroke-width="1.2"/>
<rect x="1707.5" y="754.5" width="15" height="15" fill="#aabd27"/>
<text x="1737.5" y="765.9" font-size="10" fill="#000" font-weight="bold" textLength="22.5" lengthAdjust="spacingAndGlyphs">Pfad</text>
<rect x="1704.5" y="776.5" width="17" height="18" fill="#e2e2e2" stroke="#c4c4c4" stroke-width="1"/>
<path d="M1706.5 786c3-4.500 10-4.500 13 0c-3 3.500-10 3.500-13 0z" fill="#fff" stroke="#111" stroke-width="1.400"/><circle cx="1713" cy="785.8" r="2.700" fill="#111"/><path d="M1707 783.5c3-4 9-4 12 0" fill="none" stroke="#111" stroke-width="1.600"/>
<rect x="1704.5" y="800.5" width="17" height="18" fill="#e2e2e2" stroke="#c4c4c4" stroke-width="1"/>
<path d="M1706.5 810c3-4.500 10-4.500 13 0c-3 3.500-10 3.500-13 0z" fill="#fff" stroke="#111" stroke-width="1.400"/><circle cx="1713" cy="809.8" r="2.700" fill="#111"/><path d="M1707 807.5c3-4 9-4 12 0" fill="none" stroke="#111" stroke-width="1.600"/>
<rect x="1704.5" y="824.5" width="17" height="18" fill="#e2e2e2" stroke="#c4c4c4" stroke-width="1"/>
<path d="M1706.5 834c3-4.500 10-4.500 13 0c-3 3.500-10 3.500-13 0z" fill="#fff" stroke="#999" stroke-width="1.400"/><circle cx="1713" cy="833.8" r="2.700" fill="#999"/><path d="M1707 831.5c3-4 9-4 12 0" fill="none" stroke="#999" stroke-width="1.600"/>
<path d="M1728.500 781v10l5-5z" fill="#a8a8a8" stroke="#111" stroke-width="1.2"/>
<path d="M1728.500 805v10l5-5z" fill="#a8a8a8" stroke="#111" stroke-width="1.2"/>
<text x="1738.5" y="788.7" font-size="10" fill="#1a1aff" textLength="33.8" lengthAdjust="spacingAndGlyphs">Kontur:</text>
<path d="M1738 792.500H1773" fill="none" stroke="#1a1aff" stroke-width="1" stroke-dasharray="1 1"/>
<rect x="1783.5" y="777.5" width="17.5" height="17.5" fill="#fff" stroke="#000" stroke-width="1.2"/>
<rect x="1786.5" y="780.5" width="11.5" height="11.5" fill="#fff" stroke="#000" stroke-width="1"/>
<path d="M1787 792L1798 780.500" fill="none" stroke="#e0102a" stroke-width="1.8"/>
<text x="1738.5" y="813.9" font-size="10" fill="#000" textLength="30.7" lengthAdjust="spacingAndGlyphs">Fläche:</text>
<rect x="1783.5" y="801.5" width="17.5" height="17.5" fill="#fff" stroke="#000" stroke-width="1.2"/>
<rect x="1786.5" y="804.5" width="11.5" height="11.5" fill="#aabd27" stroke="#000" stroke-width="1"/>
<text x="1738.5" y="837.2" font-size="10" fill="#1a1aff" textLength="47.7" lengthAdjust="spacingAndGlyphs">Deckkraft:</text>
<path d="M1738 840.500H1787" fill="none" stroke="#1a1aff" stroke-width="1" stroke-dasharray="1 1"/>
<text x="1792.3" y="837.2" font-size="10" fill="#000" textLength="40" lengthAdjust="spacingAndGlyphs">Standard</text>
<path d="M1902 762.500h8l-4-4z" fill="#aaa"/>
<path d="M1902 865.500h8l-4 4z" fill="#aaa"/>
<rect x="1714.5" y="879.5" width="8" height="8" fill="#555" stroke="#222" stroke-width="1"/>
<rect x="1716.5" y="881.5" width="4" height="4" fill="#ddd"/>
<rect x="1748.5" y="879.5" width="9" height="9" fill="#fff" stroke="#444" stroke-width="1"/>
<text x="1779" y="887.5" font-size="12" fill="#222" font-family="Liberation Serif, serif" font-weight="bold" font-style="italic">fx</text>
<path d="M1796 889v-2.500l-2.500 2.500z" fill="#222"/>
<circle cx="1818.500" cy="884" r="4" fill="none" stroke="#333" stroke-width="1.200"/>
<path d="M1815.700 881.200l5.600 5.600" fill="none" stroke="#333" stroke-width="1.2"/>
<rect x="1849.5" y="880.5" width="8" height="8" fill="#eee" stroke="#9a9a9a" stroke-width="1"/>
<rect x="1849.5" y="884.5" width="4" height="4" fill="#d4d4d4" stroke="#9a9a9a" stroke-width="1"/>
<path d="M1880.500 881.500h6v6.500h-6zM1879 880.500h9M1882 879h3" fill="#eee" stroke="#9a9a9a" stroke-width="1.1"/>
<text x="1706.2" y="926.8" font-size="10" fill="#000" textLength="88.3" lengthAdjust="spacingAndGlyphs">Objekte ausrichten:</text>
<text x="1706.2" y="964.6" font-size="10" fill="#000" textLength="79.8" lengthAdjust="spacingAndGlyphs">Objekte verteilen:</text>
<text x="1706.2" y="1002.7" font-size="10" fill="#000" textLength="81.5" lengthAdjust="spacingAndGlyphs">Abstand verteilen:</text>
<text x="1840.6" y="1004.2" font-size="10" fill="#000" textLength="64.9" lengthAdjust="spacingAndGlyphs">Ausrichten an:</text>
<path d="M1706 951.500H1910M1706 989.500H1910" fill="none" stroke="#b4b4b4" stroke-width="1"/>
<path d="M1706 952.500H1910M1706 990.500H1910" fill="none" stroke="#f0f0f0" stroke-width="1"/>
<path d="M1835.500 1000V1028" fill="none" stroke="#b4b4b4" stroke-width="1"/>
<path d="M1836.500 1000V1028" fill="none" stroke="#f0f0f0" stroke-width="1"/>
<path d="M1713.5 932.5v14" fill="none" stroke="#1a1a1a" stroke-width="1"/><rect x="1716.5" y="934" width="6" height="4" fill="url(#gbox)" stroke="#1a1a1a" stroke-width="1"/><rect x="1716.5" y="941" width="11" height="4" fill="url(#gbox)" stroke="#1a1a1a" stroke-width="1"/>
<path d="M1754.5 932.5v14" fill="none" stroke="#1a1a1a" stroke-width="1"/><rect x="1751.5" y="934" width="6" height="4" fill="url(#gbox)" stroke="#1a1a1a" stroke-width="1"/><rect x="1748.5" y="941" width="12" height="4" fill="url(#gbox)" stroke="#1a1a1a" stroke-width="1"/>
<path d="M1795.5 932.5v14" fill="none" stroke="#1a1a1a" stroke-width="1"/><rect x="1786.5" y="934" width="6" height="4" fill="url(#gbox)" stroke="#1a1a1a" stroke-width="1"/><rect x="1781.5" y="941" width="11" height="4" fill="url(#gbox)" stroke="#1a1a1a" stroke-width="1"/>
<path d="M1814 935h16" fill="none" stroke="#1a1a1a" stroke-width="1"/><rect x="1816.5" y="937" width="4" height="8" fill="url(#gbox)" stroke="#1a1a1a" stroke-width="1"/><rect x="1823.5" y="937" width="4" height="4" fill="url(#gbox)" stroke="#1a1a1a" stroke-width="1"/>
<path d="M1848 940h17" fill="none" stroke="#1a1a1a" stroke-width="1"/><rect x="1851.5" y="935" width="4" height="10" fill="url(#gbox)" stroke="#1a1a1a" stroke-width="1"/><rect x="1858.5" y="938" width="4" height="4" fill="url(#gbox)" stroke="#1a1a1a" stroke-width="1"/>
<path d="M1882 945h16" fill="none" stroke="#1a1a1a" stroke-width="1"/><rect x="1884.5" y="935" width="4" height="9" fill="url(#gbox)" stroke="#1a1a1a" stroke-width="1"/><rect x="1891.5" y="940" width="4" height="4" fill="url(#gbox)" stroke="#1a1a1a" stroke-width="1"/>
<path d="M1712 970.5h17M1712 977.5h17" fill="none" stroke="#111" stroke-width="1"/><rect x="1715.5" y="971.5" width="10" height="4.5" fill="url(#gbox)" stroke="#111" stroke-width="1"/><rect x="1714.5" y="978.5" width="12" height="4.5" fill="url(#gbox)" stroke="#111" stroke-width="1"/>
<path d="M1746 973.5h17M1746 980.5h17" fill="none" stroke="#111" stroke-width="1"/><rect x="1749.5" y="971.5" width="10" height="4.5" fill="url(#gbox)" stroke="#111" stroke-width="1"/><rect x="1748.5" y="978.5" width="12" height="4.5" fill="url(#gbox)" stroke="#111" stroke-width="1"/>
<path d="M1780 975.5h17M1780 982.5h17" fill="none" stroke="#111" stroke-width="1"/><rect x="1783.5" y="971.5" width="10" height="4.5" fill="url(#gbox)" stroke="#111" stroke-width="1"/><rect x="1782.5" y="978.5" width="12" height="4.5" fill="url(#gbox)" stroke="#111" stroke-width="1"/>
<path d="M1815.5 969v15M1822.5 969v15" fill="none" stroke="#111" stroke-width="1"/><rect x="1816.5" y="971.5" width="4.5" height="11" fill="url(#gbox)" stroke="#111" stroke-width="1"/><rect x="1823.5" y="973.5" width="4.5" height="8" fill="url(#gbox)" stroke="#111" stroke-width="1"/>
<path d="M1852.5 969v15M1859.5 969v15" fill="none" stroke="#111" stroke-width="1"/><rect x="1850.5" y="971.5" width="4.5" height="11" fill="url(#gbox)" stroke="#111" stroke-width="1"/><rect x="1857.5" y="973.5" width="4.5" height="8" fill="url(#gbox)" stroke="#111" stroke-width="1"/>
<path d="M1888.5 969v15M1895.5 969v15" fill="none" stroke="#111" stroke-width="1"/><rect x="1884.5" y="971.5" width="4.5" height="11" fill="url(#gbox)" stroke="#111" stroke-width="1"/><rect x="1891.5" y="973.5" width="4.5" height="8" fill="url(#gbox)" stroke="#111" stroke-width="1"/>
<path d="M1712 1016.500h18M1712 1019.500h18" fill="none" stroke="#111" stroke-width="1"/>
<rect x="1717.5" y="1010.5" width="7" height="4" fill="url(#gbox)" stroke="#111" stroke-width="1"/>
<rect x="1718.5" y="1022.5" width="5" height="3.5" fill="#fff" stroke="#111" stroke-width="1"/>
<path d="M1752.500 1010v16M1755.500 1010v16" fill="none" stroke="#111" stroke-width="1"/>
<rect x="1747.5" y="1011.5" width="3" height="5" fill="#fff" stroke="#111" stroke-width="1"/>
<rect x="1757.5" y="1014.5" width="4" height="10" fill="url(#gbox)" stroke="#111" stroke-width="1"/>
<rect x="1779.5" y="1010.5" width="12" height="15" fill="#f4f4f4" stroke="#b5b5b5" stroke-width="1"/><path d="M1780 1018h11" fill="none" stroke="#c8c8c8" stroke-width="1"/><path d="M1782.5 1016l3 -3.5l3 3.5z" fill="#aaa"/><path d="M1782.5 1020l3 3.5l3 -3.5z" fill="#aaa"/>
<text x="1796" y="1022.3" font-size="10" fill="#9a9a9a" textLength="24" lengthAdjust="spacingAndGlyphs">0 mm</text>
<rect x="1862.5" y="1010.5" width="12" height="16" fill="#eee" stroke="#222" stroke-width="1.4"/>
<rect x="1866" y="1014" width="5" height="9" fill="#999" stroke="#222" stroke-width="1.2"/>
<path d="M1868.500 1010.500v3.500M1868.500 1023v3.500M1862.500 1018.500h3.500M1871 1018.500h3.500" fill="none" stroke="#222" stroke-width="1.2"/>
<path d="M1879 1016h5.500l-2.700 4.500z" fill="#222"/>
</svg>
</body>
</html>
